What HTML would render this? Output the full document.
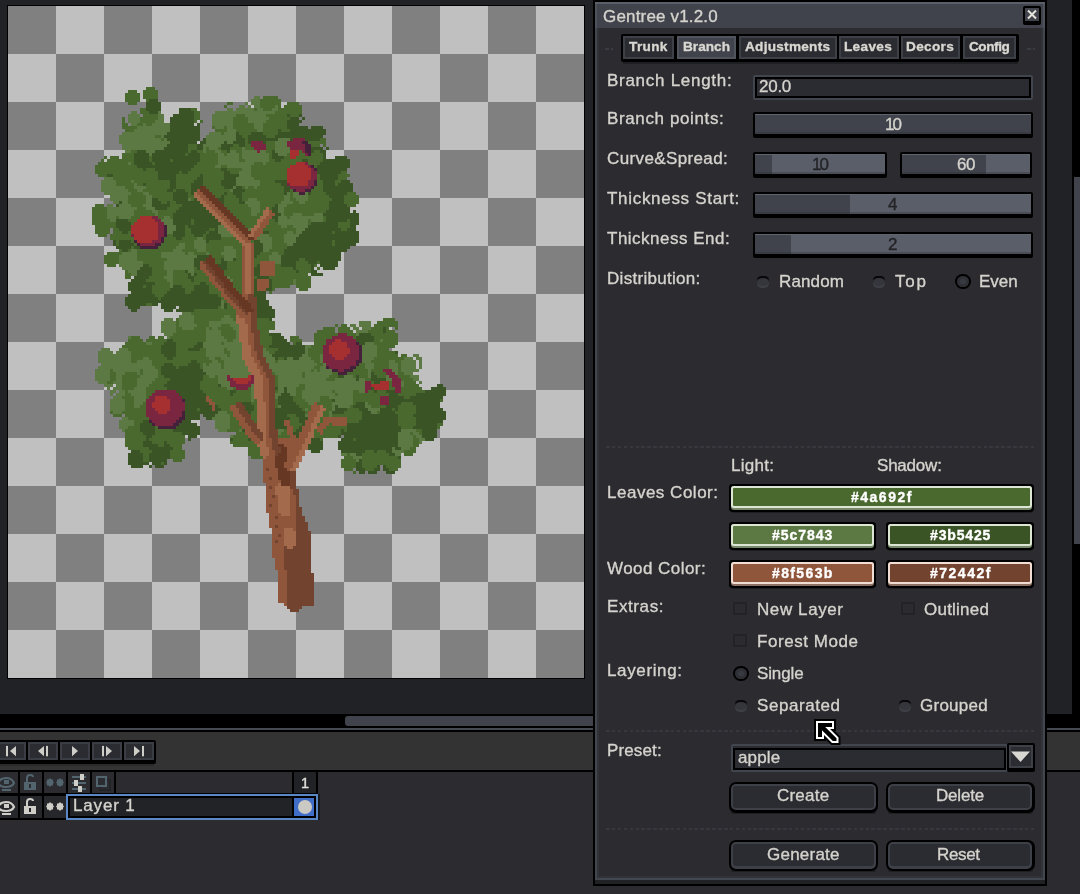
<!DOCTYPE html>
<html><head><meta charset="utf-8"><title>Gentree v1.2.0</title>
<style>
html,body{margin:0;padding:0;}
body{width:1080px;height:894px;overflow:hidden;background:#212226;position:relative;font-family:"Liberation Sans", sans-serif;}
body>div,body>svg,body>span{position:absolute;display:block;}
body>span{white-space:pre;will-change:transform;-webkit-text-stroke:0.35px;}
</style></head><body>
<div style="left:7px;top:5px;width:578px;height:674px;background:#000;"></div>
<div id="chk" style="left:8px;top:6px;width:576px;height:672px;background-color:#c0c0c0;background-image:conic-gradient(#c0c0c0 25%,#808080 0 50%,#c0c0c0 0 75%,#808080 0);background-size:96px 96px;"></div>
<svg id="tree" style="left:8px;top:6px" width="576" height="672" viewBox="0 0 192 224" shape-rendering="crispEdges">
<path fill="#5c7843" d="M82 30h2v1h-2zM81 31h3v1h-3zM79 32h1v1h-1zM81 32h3v1h-3zM77 33h2v1h-2zM80 33h1v1h-1zM82 33h2v1h-2zM89 33h1v1h-1zM73 34h2v1h-2zM76 34h6v1h-6zM83 34h2v1h-2zM88 34h2v1h-2zM41 35h2v1h-2zM50 35h1v1h-1zM69 35h20v1h-20zM40 36h4v1h-4zM50 36h2v1h-2zM68 36h8v1h-8zM79 36h7v1h-7zM40 37h4v1h-4zM50 37h2v1h-2zM68 37h7v1h-7zM80 37h7v1h-7zM40 38h4v1h-4zM49 38h3v1h-3zM68 38h7v1h-7zM80 38h6v1h-6zM41 39h2v1h-2zM45 39h1v1h-1zM48 39h6v1h-6zM68 39h7v1h-7zM82 39h3v1h-3zM43 40h11v1h-11zM69 40h3v1h-3zM73 40h2v1h-2zM82 40h3v1h-3zM42 41h12v1h-12zM73 41h3v1h-3zM83 41h2v1h-2zM38 42h15v1h-15zM67 42h4v1h-4zM72 42h4v1h-4zM37 43h12v1h-12zM51 43h1v1h-1zM66 43h10v1h-10zM37 44h14v1h-14zM52 44h1v1h-1zM66 44h10v1h-10zM90 44h4v1h-4zM37 45h17v1h-17zM66 45h6v1h-6zM73 45h2v1h-2zM89 45h4v1h-4zM38 46h15v1h-15zM65 46h6v1h-6zM89 46h4v1h-4zM38 47h14v1h-14zM65 47h1v1h-1zM67 47h3v1h-3zM78 47h1v1h-1zM89 47h5v1h-5zM39 48h2v1h-2zM46 48h3v1h-3zM65 48h1v1h-1zM69 48h2v1h-2zM74 48h2v1h-2zM78 48h5v1h-5zM84 48h2v1h-2zM89 48h5v1h-5zM47 49h1v1h-1zM70 49h2v1h-2zM73 49h4v1h-4zM78 49h9v1h-9zM90 49h3v1h-3zM70 50h7v1h-7zM78 50h9v1h-9zM70 51h7v1h-7zM79 51h8v1h-8zM40 52h1v1h-1zM70 52h12v1h-12zM85 52h1v1h-1zM69 53h2v1h-2zM73 53h8v1h-8zM78 54h3v1h-3zM77 55h4v1h-4zM77 56h4v1h-4zM32 57h3v1h-3zM76 57h6v1h-6zM31 58h5v1h-5zM41 58h1v1h-1zM76 58h8v1h-8zM31 59h5v1h-5zM42 59h1v1h-1zM76 59h8v1h-8zM31 60h8v1h-8zM42 60h4v1h-4zM75 60h1v1h-1zM79 60h1v1h-1zM82 60h1v1h-1zM31 61h9v1h-9zM43 61h2v1h-2zM74 61h1v1h-1zM32 62h9v1h-9zM45 62h2v1h-2zM93 62h1v1h-1zM95 62h2v1h-2zM99 62h1v1h-1zM34 63h6v1h-6zM46 63h2v1h-2zM92 63h2v1h-2zM95 63h5v1h-5zM34 64h6v1h-6zM46 64h2v1h-2zM60 64h1v1h-1zM80 64h3v1h-3zM92 64h2v1h-2zM96 64h4v1h-4zM35 65h2v1h-2zM38 65h2v1h-2zM46 65h2v1h-2zM79 65h5v1h-5zM91 65h4v1h-4zM97 65h2v1h-2zM33 66h2v1h-2zM37 66h4v1h-4zM45 66h3v1h-3zM80 66h4v1h-4zM90 66h3v1h-3zM33 67h10v1h-10zM46 67h3v1h-3zM81 67h3v1h-3zM90 67h2v1h-2zM33 68h9v1h-9zM48 68h2v1h-2zM81 68h3v1h-3zM90 68h2v1h-2zM33 69h9v1h-9zM49 69h1v1h-1zM81 69h2v1h-2zM91 69h1v1h-1zM95 69h3v1h-3zM102 69h3v1h-3zM33 70h3v1h-3zM37 70h4v1h-4zM52 70h2v1h-2zM90 70h3v1h-3zM94 70h11v1h-11zM34 71h2v1h-2zM51 71h4v1h-4zM90 71h10v1h-10zM101 71h4v1h-4zM52 72h3v1h-3zM90 72h10v1h-10zM53 73h3v1h-3zM70 73h2v1h-2zM91 73h2v1h-2zM95 73h5v1h-5zM53 74h3v1h-3zM70 74h3v1h-3zM80 74h1v1h-1zM96 74h3v1h-3zM53 75h2v1h-2zM70 75h4v1h-4zM93 75h2v1h-2zM96 75h2v1h-2zM71 76h4v1h-4zM84 76h3v1h-3zM92 76h5v1h-5zM63 77h2v1h-2zM83 77h5v1h-5zM92 77h4v1h-4zM62 78h4v1h-4zM84 78h4v1h-4zM92 78h4v1h-4zM57 79h2v1h-2zM62 79h4v1h-4zM85 79h3v1h-3zM93 79h2v1h-2zM56 80h3v1h-3zM62 80h4v1h-4zM72 80h3v1h-3zM85 80h3v1h-3zM41 81h2v1h-2zM55 81h3v1h-3zM63 81h3v1h-3zM72 81h4v1h-4zM85 81h2v1h-2zM38 82h5v1h-5zM51 82h8v1h-8zM60 82h2v1h-2zM66 82h1v1h-1zM71 82h5v1h-5zM88 82h2v1h-2zM37 83h6v1h-6zM51 83h12v1h-12zM72 83h4v1h-4zM87 83h4v1h-4zM37 84h6v1h-6zM53 84h9v1h-9zM72 84h3v1h-3zM87 84h4v1h-4zM37 85h8v1h-8zM52 85h10v1h-10zM89 85h2v1h-2zM37 86h8v1h-8zM52 86h10v1h-10zM38 87h6v1h-6zM52 87h10v1h-10zM40 88h3v1h-3zM53 88h2v1h-2zM60 88h2v1h-2zM41 89h2v1h-2zM53 89h2v1h-2zM61 89h1v1h-1zM52 90h3v1h-3zM73 90h1v1h-1zM53 91h2v1h-2zM74 91h1v1h-1zM95 91h1v1h-1zM54 92h1v1h-1zM95 92h1v1h-1zM54 93h1v1h-1zM71 98h1v1h-1zM71 99h1v1h-1zM71 100h1v1h-1zM58 102h3v1h-3zM57 103h5v1h-5zM72 103h2v1h-2zM52 104h3v1h-3zM57 104h5v1h-5zM71 104h4v1h-4zM51 105h5v1h-5zM57 105h5v1h-5zM67 105h9v1h-9zM117 105h4v1h-4zM51 106h5v1h-5zM57 106h6v1h-6zM67 106h4v1h-4zM74 106h3v1h-3zM114 106h2v1h-2zM117 106h4v1h-4zM51 107h5v1h-5zM58 107h4v1h-4zM66 107h1v1h-1zM68 107h2v1h-2zM75 107h2v1h-2zM115 107h2v1h-2zM118 107h3v1h-3zM51 108h5v1h-5zM66 108h5v1h-5zM76 108h1v1h-1zM116 108h4v1h-4zM52 109h3v1h-3zM66 109h5v1h-5zM76 109h1v1h-1zM116 109h1v1h-1zM40 110h1v1h-1zM53 110h1v1h-1zM66 110h6v1h-6zM76 110h1v1h-1zM66 111h7v1h-7zM75 111h2v1h-2zM124 111h1v1h-1zM46 112h2v1h-2zM65 112h6v1h-6zM72 112h6v1h-6zM119 112h3v1h-3zM65 113h13v1h-13zM99 113h2v1h-2zM118 113h5v1h-5zM31 114h3v1h-3zM37 114h3v1h-3zM66 114h6v1h-6zM73 114h5v1h-5zM85 114h1v1h-1zM99 114h1v1h-1zM118 114h5v1h-5zM30 115h5v1h-5zM36 115h5v1h-5zM66 115h6v1h-6zM74 115h4v1h-4zM85 115h2v1h-2zM99 115h1v1h-1zM118 115h5v1h-5zM30 116h11v1h-11zM66 116h7v1h-7zM74 116h4v1h-4zM85 116h3v1h-3zM98 116h2v1h-2zM104 116h1v1h-1zM118 116h5v1h-5zM135 116h2v1h-2zM30 117h11v1h-11zM45 117h2v1h-2zM67 117h2v1h-2zM71 117h7v1h-7zM86 117h3v1h-3zM93 117h2v1h-2zM97 117h4v1h-4zM104 117h1v1h-1zM118 117h4v1h-4zM132 117h3v1h-3zM136 117h2v1h-2zM30 118h11v1h-11zM43 118h5v1h-5zM68 118h2v1h-2zM72 118h7v1h-7zM86 118h3v1h-3zM90 118h12v1h-12zM104 118h1v1h-1zM118 118h3v1h-3zM127 118h2v1h-2zM131 118h5v1h-5zM137 118h1v1h-1zM31 119h17v1h-17zM65 119h1v1h-1zM67 119h4v1h-4zM72 119h7v1h-7zM87 119h16v1h-16zM105 119h1v1h-1zM119 119h3v1h-3zM127 119h3v1h-3zM131 119h5v1h-5zM137 119h1v1h-1zM30 120h19v1h-19zM65 120h6v1h-6zM72 120h8v1h-8zM87 120h15v1h-15zM104 120h2v1h-2zM119 120h3v1h-3zM127 120h3v1h-3zM131 120h5v1h-5zM137 120h1v1h-1zM29 121h5v1h-5zM35 121h9v1h-9zM45 121h5v1h-5zM65 121h15v1h-15zM88 121h13v1h-13zM102 121h1v1h-1zM104 121h4v1h-4zM120 121h1v1h-1zM128 121h2v1h-2zM131 121h6v1h-6zM29 122h5v1h-5zM36 122h3v1h-3zM43 122h1v1h-1zM45 122h5v1h-5zM66 122h15v1h-15zM89 122h9v1h-9zM99 122h9v1h-9zM120 122h1v1h-1zM129 122h1v1h-1zM132 122h3v1h-3zM29 123h5v1h-5zM36 123h2v1h-2zM44 123h6v1h-6zM67 123h2v1h-2zM70 123h3v1h-3zM74 123h6v1h-6zM90 123h8v1h-8zM99 123h8v1h-8zM112 123h3v1h-3zM120 123h1v1h-1zM126 123h1v1h-1zM134 123h3v1h-3zM29 124h5v1h-5zM36 124h2v1h-2zM43 124h6v1h-6zM70 124h3v1h-3zM90 124h16v1h-16zM109 124h7v1h-7zM117 124h2v1h-2zM126 124h2v1h-2zM135 124h2v1h-2zM30 125h3v1h-3zM35 125h3v1h-3zM43 125h5v1h-5zM70 125h4v1h-4zM90 125h29v1h-29zM131 125h1v1h-1zM137 125h1v1h-1zM32 126h3v1h-3zM36 126h2v1h-2zM43 126h4v1h-4zM71 126h3v1h-3zM81 126h1v1h-1zM90 126h7v1h-7zM99 126h20v1h-20zM131 126h1v1h-1zM33 127h1v1h-1zM35 127h3v1h-3zM42 127h4v1h-4zM73 127h2v1h-2zM81 127h1v1h-1zM90 127h2v1h-2zM93 127h3v1h-3zM99 127h20v1h-20zM34 128h2v1h-2zM37 128h2v1h-2zM40 128h6v1h-6zM81 128h1v1h-1zM90 128h2v1h-2zM93 128h3v1h-3zM98 128h10v1h-10zM109 128h6v1h-6zM117 128h2v1h-2zM34 129h1v1h-1zM36 129h3v1h-3zM41 129h5v1h-5zM81 129h1v1h-1zM89 129h2v1h-2zM94 129h2v1h-2zM98 129h11v1h-11zM110 129h5v1h-5zM35 130h3v1h-3zM42 130h4v1h-4zM81 130h1v1h-1zM89 130h1v1h-1zM98 130h6v1h-6zM107 130h8v1h-8zM34 131h5v1h-5zM42 131h4v1h-4zM81 131h1v1h-1zM99 131h5v1h-5zM109 131h6v1h-6zM34 132h5v1h-5zM42 132h3v1h-3zM100 132h2v1h-2zM108 132h7v1h-7zM119 132h1v1h-1zM34 133h5v1h-5zM42 133h2v1h-2zM90 133h1v1h-1zM108 133h1v1h-1zM110 133h4v1h-4zM119 133h2v1h-2zM34 134h5v1h-5zM99 134h1v1h-1zM108 134h1v1h-1zM120 134h4v1h-4zM35 135h3v1h-3zM70 135h3v1h-3zM107 135h1v1h-1zM121 135h2v1h-2zM69 136h5v1h-5zM99 136h1v1h-1zM107 136h1v1h-1zM38 137h2v1h-2zM68 137h6v1h-6zM37 138h5v1h-5zM69 138h5v1h-5zM37 139h5v1h-5zM69 139h5v1h-5zM37 140h3v1h-3zM69 140h5v1h-5zM38 141h1v1h-1zM70 141h3v1h-3zM77 141h1v1h-1zM90 141h2v1h-2zM131 141h5v1h-5zM90 142h1v1h-1zM130 142h4v1h-4zM135 142h2v1h-2zM74 143h1v1h-1zM130 143h5v1h-5zM136 143h2v1h-2zM130 144h5v1h-5zM137 144h2v1h-2zM130 145h5v1h-5zM137 145h1v1h-1zM130 146h5v1h-5zM128 147h1v1h-1zM131 147h3v1h-3zM128 148h4v1h-4zM111 149h2v1h-2zM114 149h2v1h-2zM129 149h2v1h-2zM115 150h3v1h-3zM116 151h1v1h-1z"/>
<path fill="#4a692f" d="M46 27h3v1h-3zM40 28h3v1h-3zM45 28h5v1h-5zM39 29h5v1h-5zM45 29h5v1h-5zM39 30h5v1h-5zM45 30h5v1h-5zM85 30h5v1h-5zM39 31h5v1h-5zM46 31h1v1h-1zM84 31h7v1h-7zM40 32h3v1h-3zM73 32h2v1h-2zM84 32h7v1h-7zM93 32h4v1h-4zM72 33h1v1h-1zM84 33h5v1h-5zM90 33h1v1h-1zM92 33h6v1h-6zM44 34h2v1h-2zM61 34h2v1h-2zM82 34h1v1h-1zM85 34h3v1h-3zM90 34h8v1h-8zM44 35h3v1h-3zM62 35h2v1h-2zM89 35h9v1h-9zM45 36h5v1h-5zM62 36h2v1h-2zM76 36h3v1h-3zM86 36h7v1h-7zM94 36h3v1h-3zM38 37h1v1h-1zM44 37h6v1h-6zM62 37h2v1h-2zM75 37h5v1h-5zM87 37h7v1h-7zM38 38h1v1h-1zM44 38h5v1h-5zM62 38h1v1h-1zM64 38h1v1h-1zM75 38h5v1h-5zM86 38h7v1h-7zM38 39h2v1h-2zM43 39h2v1h-2zM46 39h2v1h-2zM75 39h7v1h-7zM85 39h8v1h-8zM38 40h5v1h-5zM68 40h1v1h-1zM72 40h1v1h-1zM75 40h7v1h-7zM85 40h8v1h-8zM39 41h3v1h-3zM69 41h4v1h-4zM76 41h7v1h-7zM85 41h5v1h-5zM91 41h3v1h-3zM71 42h1v1h-1zM77 42h4v1h-4zM85 42h5v1h-5zM49 43h2v1h-2zM78 43h2v1h-2zM86 43h3v1h-3zM51 44h1v1h-1zM79 44h1v1h-1zM104 44h2v1h-2zM79 45h1v1h-1zM86 45h3v1h-3zM100 45h6v1h-6zM60 46h3v1h-3zM75 46h2v1h-2zM79 46h2v1h-2zM86 46h3v1h-3zM101 46h3v1h-3zM105 46h1v1h-1zM60 47h3v1h-3zM66 47h1v1h-1zM70 47h1v1h-1zM74 47h4v1h-4zM79 47h3v1h-3zM86 47h3v1h-3zM41 48h2v1h-2zM60 48h1v1h-1zM63 48h2v1h-2zM66 48h3v1h-3zM71 48h2v1h-2zM76 48h2v1h-2zM86 48h2v1h-2zM97 48h1v1h-1zM102 48h2v1h-2zM38 49h4v1h-4zM59 49h1v1h-1zM64 49h6v1h-6zM72 49h1v1h-1zM77 49h1v1h-1zM87 49h1v1h-1zM93 49h1v1h-1zM97 49h2v1h-2zM101 49h4v1h-4zM32 50h1v1h-1zM34 50h3v1h-3zM38 50h4v1h-4zM47 50h1v1h-1zM64 50h6v1h-6zM77 50h1v1h-1zM87 50h1v1h-1zM92 50h2v1h-2zM96 50h9v1h-9zM31 51h1v1h-1zM33 51h9v1h-9zM47 51h1v1h-1zM54 51h1v1h-1zM64 51h6v1h-6zM77 51h2v1h-2zM87 51h2v1h-2zM91 51h7v1h-7zM100 51h5v1h-5zM30 52h10v1h-10zM41 52h1v1h-1zM48 52h1v1h-1zM63 52h7v1h-7zM82 52h3v1h-3zM86 52h10v1h-10zM100 52h4v1h-4zM29 53h14v1h-14zM62 53h7v1h-7zM71 53h2v1h-2zM81 53h13v1h-13zM102 53h1v1h-1zM29 54h16v1h-16zM46 54h3v1h-3zM61 54h10v1h-10zM73 54h5v1h-5zM81 54h12v1h-12zM29 55h21v1h-21zM57 55h1v1h-1zM60 55h12v1h-12zM74 55h3v1h-3zM81 55h12v1h-12zM111 55h2v1h-2zM30 56h3v1h-3zM35 56h15v1h-15zM56 56h8v1h-8zM65 56h7v1h-7zM81 56h12v1h-12zM103 56h1v1h-1zM110 56h4v1h-4zM35 57h15v1h-15zM56 57h7v1h-7zM65 57h7v1h-7zM82 57h11v1h-11zM103 57h1v1h-1zM110 57h3v1h-3zM36 58h5v1h-5zM42 58h12v1h-12zM56 58h6v1h-6zM65 58h6v1h-6zM84 58h5v1h-5zM103 58h2v1h-2zM109 58h2v1h-2zM36 59h6v1h-6zM43 59h2v1h-2zM46 59h8v1h-8zM56 59h5v1h-5zM65 59h6v1h-6zM84 59h7v1h-7zM103 59h2v1h-2zM109 59h1v1h-1zM39 60h3v1h-3zM46 60h8v1h-8zM56 60h5v1h-5zM66 60h6v1h-6zM78 60h1v1h-1zM80 60h2v1h-2zM83 60h9v1h-9zM102 60h3v1h-3zM40 61h3v1h-3zM45 61h8v1h-8zM55 61h1v1h-1zM59 61h2v1h-2zM67 61h7v1h-7zM79 61h13v1h-13zM94 61h1v1h-1zM101 61h4v1h-4zM41 62h4v1h-4zM47 62h8v1h-8zM60 62h1v1h-1zM68 62h4v1h-4zM73 62h2v1h-2zM78 62h14v1h-14zM94 62h1v1h-1zM101 62h5v1h-5zM113 62h3v1h-3zM40 63h6v1h-6zM48 63h7v1h-7zM60 63h2v1h-2zM69 63h2v1h-2zM72 63h4v1h-4zM78 63h14v1h-14zM94 63h1v1h-1zM100 63h7v1h-7zM112 63h5v1h-5zM40 64h6v1h-6zM50 64h5v1h-5zM61 64h1v1h-1zM72 64h5v1h-5zM78 64h2v1h-2zM83 64h9v1h-9zM94 64h2v1h-2zM100 64h8v1h-8zM112 64h5v1h-5zM40 65h6v1h-6zM51 65h2v1h-2zM54 65h2v1h-2zM72 65h5v1h-5zM84 65h7v1h-7zM95 65h2v1h-2zM99 65h8v1h-8zM112 65h5v1h-5zM29 66h3v1h-3zM41 66h4v1h-4zM54 66h4v1h-4zM72 66h8v1h-8zM84 66h5v1h-5zM93 66h14v1h-14zM113 66h3v1h-3zM28 67h5v1h-5zM43 67h3v1h-3zM53 67h4v1h-4zM73 67h8v1h-8zM84 67h2v1h-2zM87 67h1v1h-1zM92 67h15v1h-15zM28 68h5v1h-5zM42 68h6v1h-6zM50 68h6v1h-6zM74 68h7v1h-7zM84 68h1v1h-1zM92 68h14v1h-14zM28 69h5v1h-5zM42 69h7v1h-7zM50 69h5v1h-5zM75 69h6v1h-6zM83 69h2v1h-2zM92 69h3v1h-3zM98 69h4v1h-4zM28 70h5v1h-5zM36 70h1v1h-1zM41 70h3v1h-3zM50 70h2v1h-2zM54 70h1v1h-1zM76 70h8v1h-8zM93 70h1v1h-1zM105 70h1v1h-1zM28 71h6v1h-6zM40 71h3v1h-3zM61 71h1v1h-1zM77 71h6v1h-6zM87 71h2v1h-2zM100 71h1v1h-1zM105 71h1v1h-1zM113 71h1v1h-1zM28 72h8v1h-8zM41 72h1v1h-1zM61 72h1v1h-1zM78 72h5v1h-5zM87 72h3v1h-3zM100 72h1v1h-1zM110 72h4v1h-4zM29 73h7v1h-7zM59 73h1v1h-1zM79 73h3v1h-3zM86 73h5v1h-5zM93 73h2v1h-2zM110 73h4v1h-4zM29 74h5v1h-5zM35 74h2v1h-2zM59 74h2v1h-2zM67 74h2v1h-2zM85 74h11v1h-11zM111 74h2v1h-2zM29 75h5v1h-5zM35 75h3v1h-3zM40 75h1v1h-1zM59 75h2v1h-2zM66 75h1v1h-1zM87 75h6v1h-6zM95 75h1v1h-1zM108 75h1v1h-1zM30 76h3v1h-3zM34 76h7v1h-7zM53 76h2v1h-2zM59 76h3v1h-3zM65 76h1v1h-1zM87 76h5v1h-5zM34 77h8v1h-8zM52 77h4v1h-4zM58 77h5v1h-5zM65 77h1v1h-1zM71 77h5v1h-5zM88 77h4v1h-4zM36 78h1v1h-1zM41 78h1v1h-1zM52 78h10v1h-10zM67 78h10v1h-10zM81 78h1v1h-1zM88 78h4v1h-4zM108 78h1v1h-1zM36 79h1v1h-1zM42 79h1v1h-1zM51 79h6v1h-6zM59 79h3v1h-3zM66 79h12v1h-12zM88 79h5v1h-5zM108 79h1v1h-1zM41 80h1v1h-1zM50 80h6v1h-6zM59 80h3v1h-3zM66 80h6v1h-6zM75 80h3v1h-3zM88 80h5v1h-5zM37 81h1v1h-1zM40 81h1v1h-1zM43 81h12v1h-12zM58 81h5v1h-5zM66 81h6v1h-6zM76 81h2v1h-2zM87 81h5v1h-5zM33 82h5v1h-5zM43 82h8v1h-8zM59 82h1v1h-1zM62 82h4v1h-4zM67 82h4v1h-4zM76 82h2v1h-2zM84 82h4v1h-4zM90 82h2v1h-2zM32 83h5v1h-5zM43 83h8v1h-8zM68 83h4v1h-4zM76 83h2v1h-2zM83 83h4v1h-4zM32 84h5v1h-5zM43 84h10v1h-10zM69 84h2v1h-2zM76 84h2v1h-2zM82 84h5v1h-5zM97 84h2v1h-2zM32 85h5v1h-5zM45 85h7v1h-7zM69 85h2v1h-2zM73 85h5v1h-5zM82 85h2v1h-2zM96 85h4v1h-4zM103 85h1v1h-1zM33 86h3v1h-3zM47 86h5v1h-5zM73 86h5v1h-5zM82 86h1v1h-1zM89 86h2v1h-2zM96 86h5v1h-5zM102 86h1v1h-1zM48 87h4v1h-4zM62 87h1v1h-1zM73 87h5v1h-5zM89 87h6v1h-6zM96 87h5v1h-5zM103 87h1v1h-1zM39 88h1v1h-1zM48 88h5v1h-5zM55 88h4v1h-4zM62 88h3v1h-3zM72 88h6v1h-6zM89 88h7v1h-7zM97 88h4v1h-4zM39 89h2v1h-2zM48 89h5v1h-5zM55 89h5v1h-5zM63 89h3v1h-3zM72 89h6v1h-6zM89 89h11v1h-11zM39 90h2v1h-2zM47 90h5v1h-5zM55 90h5v1h-5zM62 90h5v1h-5zM74 90h4v1h-4zM82 90h1v1h-1zM87 90h14v1h-14zM46 91h7v1h-7zM55 91h6v1h-6zM62 91h5v1h-5zM75 91h3v1h-3zM88 91h7v1h-7zM96 91h5v1h-5zM49 92h5v1h-5zM55 92h9v1h-9zM66 92h2v1h-2zM75 92h3v1h-3zM88 92h7v1h-7zM96 92h5v1h-5zM45 93h1v1h-1zM48 93h6v1h-6zM58 93h4v1h-4zM67 93h2v1h-2zM75 93h3v1h-3zM88 93h6v1h-6zM96 93h5v1h-5zM48 94h6v1h-6zM59 94h3v1h-3zM67 94h3v1h-3zM76 94h2v1h-2zM88 94h1v1h-1zM97 94h3v1h-3zM48 95h5v1h-5zM59 95h2v1h-2zM67 95h4v1h-4zM77 95h1v1h-1zM87 95h1v1h-1zM49 96h3v1h-3zM70 96h1v1h-1zM50 97h1v1h-1zM71 97h1v1h-1zM72 98h1v1h-1zM46 99h2v1h-2zM73 99h1v1h-1zM70 100h1v1h-1zM73 100h2v1h-2zM62 101h14v1h-14zM61 102h15v1h-15zM62 103h10v1h-10zM74 103h2v1h-2zM56 104h1v1h-1zM62 104h9v1h-9zM75 104h1v1h-1zM83 104h4v1h-4zM125 104h4v1h-4zM56 105h1v1h-1zM62 105h5v1h-5zM83 105h6v1h-6zM123 105h7v1h-7zM56 106h1v1h-1zM63 106h4v1h-4zM71 106h3v1h-3zM83 106h6v1h-6zM109 106h1v1h-1zM111 106h2v1h-2zM122 106h8v1h-8zM56 107h2v1h-2zM62 107h4v1h-4zM67 107h1v1h-1zM70 107h5v1h-5zM83 107h6v1h-6zM105 107h4v1h-4zM110 107h4v1h-4zM121 107h4v1h-4zM126 107h1v1h-1zM129 107h1v1h-1zM56 108h10v1h-10zM71 108h5v1h-5zM84 108h3v1h-3zM103 108h6v1h-6zM110 108h5v1h-5zM120 108h5v1h-5zM126 108h3v1h-3zM55 109h11v1h-11zM71 109h5v1h-5zM84 109h3v1h-3zM102 109h8v1h-8zM113 109h3v1h-3zM121 109h9v1h-9zM41 110h3v1h-3zM47 110h2v1h-2zM50 110h2v1h-2zM54 110h12v1h-12zM72 110h4v1h-4zM84 110h4v1h-4zM94 110h3v1h-3zM102 110h6v1h-6zM115 110h1v1h-1zM122 110h8v1h-8zM40 111h5v1h-5zM46 111h7v1h-7zM55 111h11v1h-11zM73 111h2v1h-2zM84 111h4v1h-4zM94 111h4v1h-4zM102 111h4v1h-4zM122 111h2v1h-2zM125 111h5v1h-5zM39 112h7v1h-7zM48 112h4v1h-4zM56 112h7v1h-7zM71 112h1v1h-1zM84 112h4v1h-4zM95 112h1v1h-1zM102 112h4v1h-4zM122 112h8v1h-8zM38 113h13v1h-13zM56 113h6v1h-6zM85 113h2v1h-2zM101 113h4v1h-4zM123 113h6v1h-6zM40 114h11v1h-11zM56 114h4v1h-4zM64 114h2v1h-2zM72 114h1v1h-1zM86 114h4v1h-4zM100 114h5v1h-5zM123 114h4v1h-4zM41 115h10v1h-10zM56 115h10v1h-10zM72 115h2v1h-2zM87 115h2v1h-2zM100 115h5v1h-5zM123 115h6v1h-6zM41 116h11v1h-11zM56 116h10v1h-10zM73 116h1v1h-1zM100 116h4v1h-4zM123 116h7v1h-7zM131 116h2v1h-2zM41 117h4v1h-4zM47 117h6v1h-6zM55 117h12v1h-12zM69 117h2v1h-2zM90 117h2v1h-2zM101 117h3v1h-3zM122 117h10v1h-10zM41 118h2v1h-2zM48 118h13v1h-13zM63 118h5v1h-5zM70 118h2v1h-2zM89 118h1v1h-1zM102 118h2v1h-2zM121 118h6v1h-6zM129 118h2v1h-2zM48 119h4v1h-4zM55 119h5v1h-5zM64 119h1v1h-1zM66 119h1v1h-1zM71 119h1v1h-1zM103 119h2v1h-2zM117 119h2v1h-2zM122 119h5v1h-5zM130 119h1v1h-1zM49 120h2v1h-2zM56 120h1v1h-1zM64 120h1v1h-1zM71 120h1v1h-1zM102 120h2v1h-2zM116 120h3v1h-3zM122 120h5v1h-5zM130 120h1v1h-1zM34 121h1v1h-1zM44 121h1v1h-1zM50 121h1v1h-1zM101 121h1v1h-1zM103 121h1v1h-1zM115 121h5v1h-5zM121 121h4v1h-4zM130 121h1v1h-1zM34 122h2v1h-2zM39 122h4v1h-4zM44 122h1v1h-1zM50 122h1v1h-1zM88 122h1v1h-1zM98 122h1v1h-1zM108 122h2v1h-2zM113 122h7v1h-7zM122 122h4v1h-4zM130 122h2v1h-2zM34 123h2v1h-2zM38 123h6v1h-6zM50 123h2v1h-2zM65 123h2v1h-2zM69 123h1v1h-1zM89 123h1v1h-1zM98 123h1v1h-1zM107 123h3v1h-3zM115 123h1v1h-1zM117 123h3v1h-3zM123 123h3v1h-3zM130 123h4v1h-4zM34 124h2v1h-2zM38 124h5v1h-5zM49 124h5v1h-5zM65 124h5v1h-5zM89 124h1v1h-1zM106 124h3v1h-3zM119 124h2v1h-2zM131 124h4v1h-4zM33 125h2v1h-2zM38 125h5v1h-5zM48 125h5v1h-5zM64 125h6v1h-6zM89 125h1v1h-1zM121 125h1v1h-1zM127 125h1v1h-1zM132 125h4v1h-4zM38 126h5v1h-5zM47 126h5v1h-5zM64 126h6v1h-6zM89 126h1v1h-1zM97 126h2v1h-2zM127 126h1v1h-1zM132 126h5v1h-5zM38 127h4v1h-4zM46 127h7v1h-7zM64 127h9v1h-9zM75 127h1v1h-1zM80 127h1v1h-1zM96 127h3v1h-3zM127 127h2v1h-2zM131 127h7v1h-7zM39 128h1v1h-1zM46 128h3v1h-3zM65 128h9v1h-9zM76 128h5v1h-5zM89 128h1v1h-1zM96 128h2v1h-2zM108 128h1v1h-1zM115 128h2v1h-2zM120 128h2v1h-2zM123 128h3v1h-3zM131 128h8v1h-8zM39 129h2v1h-2zM46 129h2v1h-2zM66 129h8v1h-8zM75 129h6v1h-6zM96 129h2v1h-2zM109 129h1v1h-1zM115 129h12v1h-12zM130 129h6v1h-6zM38 130h4v1h-4zM46 130h1v1h-1zM67 130h14v1h-14zM95 130h3v1h-3zM104 130h3v1h-3zM115 130h9v1h-9zM132 130h2v1h-2zM39 131h3v1h-3zM68 131h13v1h-13zM82 131h1v1h-1zM89 131h1v1h-1zM95 131h4v1h-4zM104 131h4v1h-4zM115 131h9v1h-9zM144 131h1v1h-1zM39 132h3v1h-3zM45 132h1v1h-1zM69 132h7v1h-7zM81 132h2v1h-2zM89 132h1v1h-1zM96 132h4v1h-4zM103 132h5v1h-5zM115 132h1v1h-1zM120 132h4v1h-4zM131 132h4v1h-4zM39 133h3v1h-3zM44 133h2v1h-2zM70 133h4v1h-4zM82 133h1v1h-1zM89 133h1v1h-1zM97 133h4v1h-4zM105 133h3v1h-3zM114 133h1v1h-1zM121 133h5v1h-5zM130 133h6v1h-6zM39 134h7v1h-7zM63 134h1v1h-1zM71 134h3v1h-3zM82 134h1v1h-1zM98 134h1v1h-1zM100 134h1v1h-1zM106 134h2v1h-2zM113 134h4v1h-4zM128 134h1v1h-1zM130 134h6v1h-6zM34 135h1v1h-1zM38 135h8v1h-8zM73 135h2v1h-2zM81 135h2v1h-2zM99 135h1v1h-1zM105 135h2v1h-2zM112 135h6v1h-6zM123 135h1v1h-1zM129 135h7v1h-7zM35 136h3v1h-3zM39 136h7v1h-7zM74 136h1v1h-1zM81 136h2v1h-2zM93 136h3v1h-3zM105 136h2v1h-2zM108 136h10v1h-10zM130 136h5v1h-5zM40 137h7v1h-7zM74 137h2v1h-2zM81 137h2v1h-2zM94 137h3v1h-3zM104 137h1v1h-1zM113 137h5v1h-5zM130 137h6v1h-6zM42 138h3v1h-3zM74 138h3v1h-3zM82 138h1v1h-1zM94 138h3v1h-3zM104 138h1v1h-1zM113 138h4v1h-4zM130 138h6v1h-6zM42 139h2v1h-2zM74 139h3v1h-3zM94 139h4v1h-4zM103 139h1v1h-1zM107 139h1v1h-1zM130 139h6v1h-6zM143 139h2v1h-2zM40 140h4v1h-4zM49 140h1v1h-1zM74 140h4v1h-4zM95 140h2v1h-2zM106 140h7v1h-7zM131 140h4v1h-4zM143 140h1v1h-1zM39 141h5v1h-5zM49 141h6v1h-6zM73 141h4v1h-4zM92 141h1v1h-1zM95 141h1v1h-1zM102 141h1v1h-1zM105 141h6v1h-6zM112 141h1v1h-1zM136 141h2v1h-2zM39 142h6v1h-6zM49 142h9v1h-9zM76 142h3v1h-3zM91 142h2v1h-2zM102 142h2v1h-2zM105 142h6v1h-6zM134 142h1v1h-1zM137 142h1v1h-1zM39 143h7v1h-7zM48 143h11v1h-11zM75 143h5v1h-5zM90 143h4v1h-4zM102 143h8v1h-8zM135 143h1v1h-1zM39 144h7v1h-7zM47 144h12v1h-12zM75 144h5v1h-5zM104 144h1v1h-1zM115 144h1v1h-1zM135 144h2v1h-2zM39 145h6v1h-6zM48 145h4v1h-4zM53 145h6v1h-6zM74 145h8v1h-8zM135 145h2v1h-2zM39 146h6v1h-6zM50 146h2v1h-2zM54 146h4v1h-4zM75 146h8v1h-8zM135 146h2v1h-2zM40 147h7v1h-7zM55 147h3v1h-3zM80 147h4v1h-4zM134 147h2v1h-2zM44 148h4v1h-4zM54 148h5v1h-5zM80 148h4v1h-4zM119 148h3v1h-3zM123 148h3v1h-3zM132 148h4v1h-4zM45 149h2v1h-2zM54 149h5v1h-5zM80 149h4v1h-4zM113 149h1v1h-1zM118 149h9v1h-9zM132 149h3v1h-3zM45 150h2v1h-2zM54 150h5v1h-5zM81 150h4v1h-4zM112 150h3v1h-3zM118 150h12v1h-12zM45 151h2v1h-2zM55 151h3v1h-3zM111 151h5v1h-5zM118 151h13v1h-13zM51 152h1v1h-1zM111 152h5v1h-5zM118 152h13v1h-13zM111 153h5v1h-5zM118 153h5v1h-5zM126 153h5v1h-5zM112 154h3v1h-3zM119 154h3v1h-3zM127 154h3v1h-3zM115 155h1v1h-1z"/>
<path fill="#3b5425" d="M47 31h3v1h-3zM46 32h5v1h-5zM46 33h5v1h-5zM46 34h5v1h-5zM57 34h4v1h-4zM47 35h3v1h-3zM57 35h5v1h-5zM55 36h7v1h-7zM93 36h1v1h-1zM97 36h1v1h-1zM54 37h8v1h-8zM94 37h3v1h-3zM98 37h1v1h-1zM54 38h8v1h-8zM93 38h5v1h-5zM54 39h8v1h-8zM63 39h1v1h-1zM93 39h4v1h-4zM54 40h10v1h-10zM93 40h7v1h-7zM101 40h4v1h-4zM54 41h10v1h-10zM90 41h1v1h-1zM94 41h12v1h-12zM53 42h11v1h-11zM76 42h1v1h-1zM81 42h4v1h-4zM90 42h16v1h-16zM52 43h12v1h-12zM76 43h2v1h-2zM80 43h6v1h-6zM89 43h16v1h-16zM53 44h11v1h-11zM65 44h1v1h-1zM76 44h3v1h-3zM80 44h10v1h-10zM94 44h1v1h-1zM99 44h5v1h-5zM54 45h9v1h-9zM64 45h2v1h-2zM72 45h1v1h-1zM75 45h4v1h-4zM80 45h1v1h-1zM85 45h1v1h-1zM53 46h7v1h-7zM63 46h2v1h-2zM71 46h4v1h-4zM77 46h2v1h-2zM52 47h8v1h-8zM63 47h2v1h-2zM71 47h3v1h-3zM101 47h4v1h-4zM106 47h1v1h-1zM43 48h3v1h-3zM49 48h11v1h-11zM61 48h2v1h-2zM73 48h1v1h-1zM88 48h1v1h-1zM101 48h1v1h-1zM104 48h2v1h-2zM42 49h5v1h-5zM48 49h11v1h-11zM60 49h4v1h-4zM88 49h2v1h-2zM105 49h1v1h-1zM42 50h5v1h-5zM48 50h16v1h-16zM88 50h4v1h-4zM105 50h1v1h-1zM109 50h4v1h-4zM42 51h5v1h-5zM48 51h6v1h-6zM55 51h9v1h-9zM89 51h2v1h-2zM98 51h2v1h-2zM105 51h9v1h-9zM42 52h6v1h-6zM49 52h14v1h-14zM104 52h10v1h-10zM43 53h19v1h-19zM103 53h11v1h-11zM45 54h1v1h-1zM49 54h12v1h-12zM71 54h2v1h-2zM103 54h10v1h-10zM50 55h7v1h-7zM58 55h2v1h-2zM72 55h2v1h-2zM103 55h8v1h-8zM33 56h2v1h-2zM50 56h6v1h-6zM64 56h1v1h-1zM72 56h5v1h-5zM104 56h6v1h-6zM50 57h6v1h-6zM63 57h2v1h-2zM72 57h4v1h-4zM104 57h6v1h-6zM54 58h2v1h-2zM62 58h3v1h-3zM71 58h5v1h-5zM89 58h4v1h-4zM105 58h4v1h-4zM111 58h3v1h-3zM45 59h1v1h-1zM54 59h2v1h-2zM61 59h4v1h-4zM71 59h5v1h-5zM91 59h2v1h-2zM105 59h4v1h-4zM110 59h5v1h-5zM54 60h2v1h-2zM61 60h3v1h-3zM72 60h3v1h-3zM76 60h2v1h-2zM92 60h2v1h-2zM105 60h10v1h-10zM53 61h2v1h-2zM56 61h3v1h-3zM61 61h2v1h-2zM75 61h4v1h-4zM92 61h2v1h-2zM105 61h10v1h-10zM55 62h5v1h-5zM61 62h1v1h-1zM72 62h1v1h-1zM75 62h3v1h-3zM92 62h1v1h-1zM100 62h1v1h-1zM106 62h7v1h-7zM55 63h5v1h-5zM71 63h1v1h-1zM76 63h2v1h-2zM107 63h5v1h-5zM48 64h2v1h-2zM55 64h5v1h-5zM62 64h1v1h-1zM70 64h2v1h-2zM77 64h1v1h-1zM108 64h4v1h-4zM37 65h1v1h-1zM48 65h3v1h-3zM53 65h1v1h-1zM56 65h8v1h-8zM71 65h1v1h-1zM77 65h2v1h-2zM107 65h5v1h-5zM36 66h1v1h-1zM48 66h6v1h-6zM58 66h7v1h-7zM89 66h1v1h-1zM107 66h6v1h-6zM49 67h4v1h-4zM57 67h9v1h-9zM88 67h2v1h-2zM107 67h7v1h-7zM56 68h11v1h-11zM88 68h2v1h-2zM106 68h8v1h-8zM115 68h1v1h-1zM55 69h13v1h-13zM89 69h2v1h-2zM105 69h12v1h-12zM55 70h14v1h-14zM88 70h2v1h-2zM106 70h11v1h-11zM36 71h4v1h-4zM55 71h6v1h-6zM62 71h8v1h-8zM89 71h1v1h-1zM106 71h7v1h-7zM114 71h3v1h-3zM36 72h5v1h-5zM55 72h6v1h-6zM62 72h9v1h-9zM101 72h9v1h-9zM114 72h3v1h-3zM36 73h5v1h-5zM56 73h3v1h-3zM60 73h10v1h-10zM100 73h10v1h-10zM114 73h2v1h-2zM37 74h4v1h-4zM56 74h3v1h-3zM61 74h6v1h-6zM69 74h1v1h-1zM99 74h12v1h-12zM113 74h3v1h-3zM38 75h2v1h-2zM55 75h4v1h-4zM61 75h5v1h-5zM67 75h3v1h-3zM85 75h2v1h-2zM98 75h10v1h-10zM109 75h8v1h-8zM55 76h4v1h-4zM62 76h3v1h-3zM66 76h5v1h-5zM97 76h20v1h-20zM56 77h2v1h-2zM66 77h5v1h-5zM96 77h21v1h-21zM35 78h1v1h-1zM37 78h4v1h-4zM66 78h1v1h-1zM82 78h2v1h-2zM96 78h12v1h-12zM109 78h8v1h-8zM35 79h1v1h-1zM37 79h5v1h-5zM82 79h3v1h-3zM95 79h13v1h-13zM109 79h7v1h-7zM36 80h5v1h-5zM42 80h2v1h-2zM82 80h3v1h-3zM93 80h21v1h-21zM38 81h2v1h-2zM82 81h3v1h-3zM92 81h21v1h-21zM82 82h2v1h-2zM92 82h19v1h-19zM63 83h4v1h-4zM82 83h1v1h-1zM91 83h20v1h-20zM62 84h4v1h-4zM71 84h1v1h-1zM75 84h1v1h-1zM91 84h6v1h-6zM99 84h12v1h-12zM62 85h2v1h-2zM71 85h2v1h-2zM91 85h5v1h-5zM100 85h3v1h-3zM104 85h6v1h-6zM45 86h2v1h-2zM62 86h2v1h-2zM70 86h3v1h-3zM83 86h1v1h-1zM91 86h5v1h-5zM101 86h1v1h-1zM104 86h6v1h-6zM44 87h4v1h-4zM63 87h1v1h-1zM71 87h2v1h-2zM82 87h2v1h-2zM95 87h1v1h-1zM101 87h1v1h-1zM105 87h4v1h-4zM43 88h5v1h-5zM59 88h1v1h-1zM82 88h2v1h-2zM96 88h1v1h-1zM101 88h2v1h-2zM43 89h5v1h-5zM60 89h1v1h-1zM62 89h1v1h-1zM82 89h2v1h-2zM101 89h4v1h-4zM42 90h5v1h-5zM60 90h2v1h-2zM83 90h4v1h-4zM41 91h5v1h-5zM61 91h1v1h-1zM82 91h1v1h-1zM87 91h1v1h-1zM40 92h9v1h-9zM64 92h2v1h-2zM82 92h1v1h-1zM87 92h1v1h-1zM40 93h5v1h-5zM46 93h2v1h-2zM55 93h3v1h-3zM62 93h5v1h-5zM82 93h1v1h-1zM87 93h1v1h-1zM40 94h8v1h-8zM54 94h5v1h-5zM62 94h5v1h-5zM82 94h1v1h-1zM86 94h2v1h-2zM41 95h7v1h-7zM53 95h6v1h-6zM61 95h6v1h-6zM82 95h4v1h-4zM40 96h9v1h-9zM52 96h18v1h-18zM82 96h4v1h-4zM39 97h11v1h-11zM51 97h20v1h-20zM83 97h3v1h-3zM39 98h32v1h-32zM83 98h4v1h-4zM39 99h7v1h-7zM48 99h2v1h-2zM51 99h20v1h-20zM72 99h1v1h-1zM83 99h4v1h-4zM40 100h4v1h-4zM51 100h5v1h-5zM57 100h13v1h-13zM72 100h1v1h-1zM83 100h5v1h-5zM41 101h2v1h-2zM52 101h3v1h-3zM56 101h6v1h-6zM83 101h6v1h-6zM83 102h6v1h-6zM83 103h6v1h-6zM87 104h1v1h-1zM125 107h1v1h-1zM125 108h1v1h-1zM87 109h4v1h-4zM117 109h4v1h-4zM88 110h4v1h-4zM116 110h6v1h-6zM53 111h2v1h-2zM88 111h5v1h-5zM116 111h6v1h-6zM52 112h4v1h-4zM63 112h2v1h-2zM88 112h6v1h-6zM96 112h2v1h-2zM117 112h2v1h-2zM51 113h5v1h-5zM62 113h3v1h-3zM87 113h12v1h-12zM51 114h5v1h-5zM60 114h4v1h-4zM90 114h9v1h-9zM51 115h5v1h-5zM89 115h10v1h-10zM129 115h1v1h-1zM52 116h4v1h-4zM88 116h10v1h-10zM53 117h2v1h-2zM89 117h1v1h-1zM92 117h1v1h-1zM95 117h2v1h-2zM61 118h2v1h-2zM52 119h3v1h-3zM60 119h4v1h-4zM51 120h5v1h-5zM57 120h7v1h-7zM51 121h14v1h-14zM51 122h15v1h-15zM121 122h1v1h-1zM52 123h13v1h-13zM110 123h2v1h-2zM116 123h1v1h-1zM121 123h2v1h-2zM54 124h11v1h-11zM116 124h1v1h-1zM121 124h5v1h-5zM53 125h11v1h-11zM122 125h2v1h-2zM52 126h12v1h-12zM70 126h1v1h-1zM143 126h2v1h-2zM53 127h11v1h-11zM89 127h1v1h-1zM92 127h1v1h-1zM121 127h1v1h-1zM141 127h5v1h-5zM56 128h9v1h-9zM74 128h2v1h-2zM92 128h1v1h-1zM122 128h1v1h-1zM126 128h3v1h-3zM139 128h7v1h-7zM57 129h9v1h-9zM74 129h1v1h-1zM91 129h3v1h-3zM127 129h3v1h-3zM136 129h10v1h-10zM58 130h8v1h-8zM90 130h5v1h-5zM127 130h5v1h-5zM134 130h11v1h-11zM59 131h7v1h-7zM90 131h5v1h-5zM108 131h1v1h-1zM127 131h17v1h-17zM59 132h8v1h-8zM78 132h3v1h-3zM90 132h6v1h-6zM116 132h3v1h-3zM127 132h4v1h-4zM135 132h9v1h-9zM59 133h9v1h-9zM69 133h1v1h-1zM79 133h3v1h-3zM91 133h6v1h-6zM109 133h1v1h-1zM115 133h4v1h-4zM126 133h4v1h-4zM136 133h8v1h-8zM59 134h4v1h-4zM64 134h4v1h-4zM69 134h2v1h-2zM79 134h3v1h-3zM89 134h9v1h-9zM109 134h4v1h-4zM117 134h3v1h-3zM124 134h4v1h-4zM129 134h1v1h-1zM136 134h9v1h-9zM59 135h11v1h-11zM80 135h1v1h-1zM89 135h10v1h-10zM108 135h4v1h-4zM118 135h3v1h-3zM124 135h5v1h-5zM136 135h10v1h-10zM59 136h5v1h-5zM65 136h4v1h-4zM89 136h4v1h-4zM96 136h3v1h-3zM118 136h12v1h-12zM135 136h11v1h-11zM59 137h5v1h-5zM66 137h2v1h-2zM89 137h5v1h-5zM97 137h3v1h-3zM118 137h12v1h-12zM136 137h10v1h-10zM45 138h2v1h-2zM58 138h3v1h-3zM89 138h3v1h-3zM97 138h2v1h-2zM117 138h13v1h-13zM136 138h9v1h-9zM44 139h4v1h-4zM57 139h6v1h-6zM89 139h3v1h-3zM98 139h1v1h-1zM113 139h17v1h-17zM136 139h7v1h-7zM44 140h5v1h-5zM56 140h8v1h-8zM89 140h4v1h-4zM97 140h1v1h-1zM113 140h18v1h-18zM135 140h8v1h-8zM44 141h5v1h-5zM55 141h9v1h-9zM78 141h1v1h-1zM96 141h2v1h-2zM111 141h1v1h-1zM113 141h18v1h-18zM138 141h5v1h-5zM45 142h4v1h-4zM58 142h6v1h-6zM95 142h2v1h-2zM111 142h19v1h-19zM138 142h5v1h-5zM46 143h2v1h-2zM60 143h3v1h-3zM96 143h1v1h-1zM110 143h1v1h-1zM112 143h18v1h-18zM138 143h5v1h-5zM46 144h1v1h-1zM60 144h1v1h-1zM74 144h1v1h-1zM80 144h1v1h-1zM101 144h3v1h-3zM111 144h4v1h-4zM116 144h14v1h-14zM139 144h3v1h-3zM45 145h3v1h-3zM52 145h1v1h-1zM101 145h4v1h-4zM110 145h20v1h-20zM45 146h5v1h-5zM52 146h2v1h-2zM100 146h5v1h-5zM110 146h20v1h-20zM47 147h8v1h-8zM100 147h5v1h-5zM110 147h18v1h-18zM129 147h2v1h-2zM41 148h3v1h-3zM48 148h6v1h-6zM101 148h3v1h-3zM111 148h8v1h-8zM122 148h1v1h-1zM126 148h2v1h-2zM40 149h5v1h-5zM47 149h7v1h-7zM116 149h2v1h-2zM127 149h2v1h-2zM40 150h5v1h-5zM47 150h7v1h-7zM130 150h1v1h-1zM40 151h5v1h-5zM47 151h6v1h-6zM117 151h1v1h-1zM40 152h7v1h-7zM48 152h3v1h-3zM52 152h1v1h-1zM116 152h2v1h-2zM41 153h4v1h-4zM47 153h1v1h-1zM49 153h3v1h-3zM116 153h2v1h-2zM123 153h1v1h-1zM125 153h1v1h-1zM116 154h3v1h-3zM122 154h2v1h-2zM125 154h2v1h-2zM117 155h2v1h-2zM120 155h3v1h-3zM126 155h3v1h-3z"/>
<path fill="#8f563b" d="M63 61h1v1h-1zM63 62h2v1h-2zM64 63h2v1h-2zM65 64h2v1h-2zM66 65h2v1h-2zM67 66h2v1h-2zM68 67h2v1h-2zM69 68h2v1h-2zM87 68h1v1h-1zM70 69h2v1h-2zM87 69h2v1h-2zM71 70h2v1h-2zM86 70h2v1h-2zM72 71h2v1h-2zM85 71h2v1h-2zM73 72h2v1h-2zM84 72h3v1h-3zM74 73h2v1h-2zM84 73h2v1h-2zM75 74h2v1h-2zM83 74h2v1h-2zM76 75h2v1h-2zM82 75h3v1h-3zM77 76h2v1h-2zM82 76h2v1h-2zM78 77h2v1h-2zM82 77h1v1h-1zM79 78h2v1h-2zM81 79h1v1h-1zM78 80h1v1h-1zM81 80h1v1h-1zM78 81h1v1h-1zM81 81h1v1h-1zM78 82h1v1h-1zM81 82h1v1h-1zM78 83h1v1h-1zM81 83h1v1h-1zM78 84h1v1h-1zM81 84h1v1h-1zM64 85h1v1h-1zM78 85h1v1h-1zM81 85h1v1h-1zM84 85h5v1h-5zM64 86h2v1h-2zM78 86h1v1h-1zM81 86h1v1h-1zM84 86h5v1h-5zM64 87h2v1h-2zM78 87h1v1h-1zM81 87h1v1h-1zM84 87h5v1h-5zM65 88h2v1h-2zM78 88h1v1h-1zM81 88h1v1h-1zM84 88h5v1h-5zM66 89h2v1h-2zM78 89h1v1h-1zM81 89h1v1h-1zM84 89h5v1h-5zM67 90h2v1h-2zM78 90h1v1h-1zM81 90h1v1h-1zM67 91h2v1h-2zM78 91h1v1h-1zM81 91h1v1h-1zM83 91h4v1h-4zM68 92h2v1h-2zM78 92h1v1h-1zM81 92h1v1h-1zM83 92h4v1h-4zM69 93h2v1h-2zM78 93h1v1h-1zM81 93h1v1h-1zM83 93h4v1h-4zM70 94h2v1h-2zM78 94h1v1h-1zM81 94h1v1h-1zM83 94h3v1h-3zM71 95h1v1h-1zM78 95h1v1h-1zM81 95h1v1h-1zM71 96h2v1h-2zM78 96h2v1h-2zM72 97h2v1h-2zM79 97h1v1h-1zM73 98h2v1h-2zM74 99h2v1h-2zM75 100h2v1h-2zM76 101h2v1h-2zM76 102h3v1h-3zM80 102h1v1h-1zM77 103h4v1h-4zM79 104h2v1h-2zM79 105h2v1h-2zM80 106h1v1h-1zM80 107h1v1h-1zM80 108h1v1h-1zM80 109h2v1h-2zM80 110h2v1h-2zM80 111h2v1h-2zM80 112h2v1h-2zM81 113h1v1h-1zM81 114h1v1h-1zM81 115h2v1h-2zM81 116h2v1h-2zM82 117h1v1h-1zM82 118h2v1h-2zM83 119h1v1h-1zM83 120h2v1h-2zM84 121h1v1h-1zM84 122h2v1h-2zM85 123h1v1h-1zM85 124h2v1h-2zM85 125h2v1h-2zM85 126h2v1h-2zM85 127h2v1h-2zM85 128h2v1h-2zM85 129h2v1h-2zM66 130h1v1h-1zM85 130h2v1h-2zM66 131h2v1h-2zM85 131h2v1h-2zM67 132h2v1h-2zM86 132h1v1h-1zM102 132h1v1h-1zM68 133h1v1h-1zM74 133h2v1h-2zM86 133h1v1h-1zM101 133h3v1h-3zM68 134h1v1h-1zM74 134h3v1h-3zM86 134h1v1h-1zM101 134h3v1h-3zM75 135h2v1h-2zM86 135h1v1h-1zM100 135h3v1h-3zM75 136h3v1h-3zM86 136h1v1h-1zM100 136h3v1h-3zM76 137h3v1h-3zM86 137h1v1h-1zM100 137h2v1h-2zM105 137h8v1h-8zM77 138h2v1h-2zM86 138h1v1h-1zM92 138h2v1h-2zM99 138h3v1h-3zM105 138h8v1h-8zM77 139h3v1h-3zM86 139h1v1h-1zM92 139h2v1h-2zM99 139h2v1h-2zM104 139h3v1h-3zM108 139h5v1h-5zM78 140h3v1h-3zM86 140h1v1h-1zM93 140h2v1h-2zM98 140h3v1h-3zM103 140h3v1h-3zM79 141h2v1h-2zM86 141h1v1h-1zM93 141h2v1h-2zM98 141h3v1h-3zM103 141h2v1h-2zM79 142h3v1h-3zM86 142h1v1h-1zM93 142h2v1h-2zM97 142h3v1h-3zM104 142h1v1h-1zM80 143h3v1h-3zM86 143h1v1h-1zM94 143h2v1h-2zM97 143h3v1h-3zM81 144h3v1h-3zM86 144h2v1h-2zM90 144h9v1h-9zM82 145h2v1h-2zM86 145h2v1h-2zM90 145h9v1h-9zM86 146h2v1h-2zM92 146h6v1h-6zM87 147h1v1h-1zM93 147h5v1h-5zM87 148h2v1h-2zM93 148h4v1h-4zM87 149h2v1h-2zM93 149h4v1h-4zM86 150h3v1h-3zM93 150h3v1h-3zM85 151h4v1h-4zM93 151h3v1h-3zM85 152h4v1h-4zM92 152h3v1h-3zM85 153h4v1h-4zM92 153h3v1h-3zM85 154h1v1h-1zM87 154h3v1h-3zM93 154h1v1h-1zM85 155h5v1h-5zM85 156h5v1h-5zM85 157h2v1h-2zM88 157h2v1h-2zM85 158h6v1h-6zM86 159h4v1h-4zM86 160h1v1h-1zM88 160h1v1h-1zM86 161h3v1h-3zM94 161h1v1h-1zM86 162h3v1h-3zM94 162h1v1h-1zM86 163h2v1h-2zM89 163h1v1h-1zM94 163h2v1h-2zM86 164h4v1h-4zM94 164h2v1h-2zM86 165h4v1h-4zM94 165h2v1h-2zM86 166h1v1h-1zM88 166h2v1h-2zM94 166h2v1h-2zM86 167h4v1h-4zM94 167h2v1h-2zM86 168h4v1h-4zM94 168h2v1h-2zM87 169h4v1h-4zM94 169h2v1h-2zM87 170h2v1h-2zM90 170h6v1h-6zM87 171h9v1h-9zM87 172h9v1h-9zM87 173h2v1h-2zM90 173h6v1h-6zM88 174h4v1h-4zM95 174h1v1h-1zM88 175h4v1h-4zM88 176h2v1h-2zM91 176h1v1h-1zM88 177h4v1h-4zM88 178h1v1h-1zM90 178h2v1h-2zM88 179h4v1h-4zM88 180h4v1h-4zM88 181h4v1h-4zM88 182h4v1h-4zM88 183h4v1h-4zM89 184h3v1h-3zM89 185h3v1h-3zM89 186h3v1h-3zM89 187h3v1h-3zM90 188h3v1h-3zM90 189h3v1h-3zM90 190h3v1h-3zM90 191h3v1h-3zM90 192h3v1h-3zM90 193h3v1h-3zM90 194h3v1h-3zM90 195h3v1h-3zM90 196h3v1h-3zM90 197h3v1h-3zM90 198h3v1h-3zM92 199h1v1h-1z"/>
<path fill="#72442f" d="M65 85h1v1h-1zM66 86h1v1h-1zM66 87h2v1h-2zM67 88h2v1h-2zM68 89h1v1h-1zM69 90h1v1h-1zM69 91h2v1h-2zM70 92h2v1h-2zM71 93h1v1h-1zM72 94h1v1h-1zM72 95h2v1h-2zM73 96h2v1h-2zM80 96h2v1h-2zM74 97h2v1h-2zM80 97h3v1h-3zM75 98h2v1h-2zM80 98h3v1h-3zM76 99h1v1h-1zM81 99h2v1h-2zM77 100h1v1h-1zM81 100h2v1h-2zM78 101h1v1h-1zM82 101h1v1h-1zM79 102h1v1h-1zM81 102h2v1h-2zM81 103h2v1h-2zM81 104h2v1h-2zM81 105h2v1h-2zM81 106h2v1h-2zM81 107h2v1h-2zM81 108h3v1h-3zM82 109h2v1h-2zM82 110h2v1h-2zM82 111h2v1h-2zM82 112h2v1h-2zM82 113h3v1h-3zM82 114h3v1h-3zM83 115h2v1h-2zM83 116h2v1h-2zM83 117h3v1h-3zM84 118h2v1h-2zM84 119h3v1h-3zM85 120h2v1h-2zM85 121h3v1h-3zM86 122h2v1h-2zM86 123h3v1h-3zM87 124h2v1h-2zM87 125h2v1h-2zM87 126h2v1h-2zM87 127h2v1h-2zM87 128h2v1h-2zM87 129h2v1h-2zM87 130h2v1h-2zM87 131h2v1h-2zM76 132h2v1h-2zM87 132h2v1h-2zM76 133h3v1h-3zM87 133h2v1h-2zM77 134h2v1h-2zM87 134h2v1h-2zM77 135h3v1h-3zM87 135h2v1h-2zM78 136h3v1h-3zM87 136h2v1h-2zM79 137h2v1h-2zM87 137h2v1h-2zM79 138h3v1h-3zM87 138h2v1h-2zM80 139h3v1h-3zM87 139h2v1h-2zM81 140h2v1h-2zM87 140h2v1h-2zM81 141h3v1h-3zM87 141h3v1h-3zM82 142h3v1h-3zM87 142h3v1h-3zM83 143h2v1h-2zM87 143h3v1h-3zM84 144h1v1h-1zM88 144h2v1h-2zM88 145h2v1h-2zM88 146h2v1h-2zM88 147h3v1h-3zM89 148h2v1h-2zM89 149h1v1h-1zM86 154h1v1h-1zM94 155h2v1h-2zM94 156h2v1h-2zM87 157h1v1h-1zM94 157h2v1h-2zM94 158h2v1h-2zM94 159h2v1h-2zM87 160h1v1h-1zM94 160h2v1h-2zM95 161h2v1h-2zM95 162h2v1h-2zM88 163h1v1h-1zM96 163h1v1h-1zM96 164h1v1h-1zM96 165h1v1h-1zM87 166h1v1h-1zM96 166h1v1h-1zM96 167h2v1h-2zM96 168h2v1h-2zM96 169h2v1h-2zM89 170h1v1h-1zM96 170h3v1h-3zM96 171h3v1h-3zM96 172h4v1h-4zM89 173h1v1h-1zM96 173h4v1h-4zM96 174h4v1h-4zM96 175h5v1h-5zM90 176h1v1h-1zM96 176h5v1h-5zM96 177h5v1h-5zM89 178h1v1h-1zM96 178h5v1h-5zM96 179h5v1h-5zM92 180h1v1h-1zM95 180h6v1h-6zM92 181h9v1h-9zM92 182h9v1h-9zM92 183h9v1h-9zM92 184h9v1h-9zM92 185h9v1h-9zM92 186h9v1h-9zM92 187h9v1h-9zM93 188h8v1h-8zM93 189h9v1h-9zM93 190h9v1h-9zM93 191h9v1h-9zM93 192h9v1h-9zM93 193h9v1h-9zM93 194h9v1h-9zM93 195h9v1h-9zM93 196h9v1h-9zM93 197h9v1h-9zM93 198h9v1h-9zM93 199h9v1h-9zM93 200h5v1h-5zM94 201h3v1h-3z"/>
<path fill="#a46a4c" d="M62 62h1v1h-1zM62 63h2v1h-2zM63 64h2v1h-2zM64 65h2v1h-2zM65 66h2v1h-2zM66 67h2v1h-2zM86 67h1v1h-1zM67 68h2v1h-2zM85 68h2v1h-2zM68 69h2v1h-2zM85 69h2v1h-2zM69 70h2v1h-2zM84 70h2v1h-2zM70 71h2v1h-2zM83 71h2v1h-2zM71 72h2v1h-2zM83 72h1v1h-1zM72 73h2v1h-2zM82 73h2v1h-2zM73 74h2v1h-2zM81 74h2v1h-2zM74 75h2v1h-2zM81 75h1v1h-1zM75 76h2v1h-2zM80 76h2v1h-2zM76 77h2v1h-2zM77 78h2v1h-2zM78 79h3v1h-3zM79 80h2v1h-2zM79 81h2v1h-2zM79 82h2v1h-2zM79 83h2v1h-2zM79 84h2v1h-2zM79 85h2v1h-2zM79 86h2v1h-2zM79 87h2v1h-2zM79 88h2v1h-2zM79 89h2v1h-2zM79 90h2v1h-2zM79 91h2v1h-2zM79 92h2v1h-2zM79 93h2v1h-2zM79 94h2v1h-2zM79 95h2v1h-2zM76 103h1v1h-1zM76 104h3v1h-3zM76 105h3v1h-3zM77 106h3v1h-3zM77 107h3v1h-3zM77 108h3v1h-3zM77 109h3v1h-3zM77 110h3v1h-3zM77 111h3v1h-3zM78 112h2v1h-2zM78 113h3v1h-3zM78 114h3v1h-3zM78 115h3v1h-3zM78 116h3v1h-3zM78 117h4v1h-4zM79 118h3v1h-3zM79 119h4v1h-4zM80 120h3v1h-3zM80 121h4v1h-4zM81 122h3v1h-3zM82 123h3v1h-3zM82 124h3v1h-3zM82 125h3v1h-3zM82 126h3v1h-3zM82 127h3v1h-3zM82 128h3v1h-3zM82 129h3v1h-3zM82 130h3v1h-3zM83 131h2v1h-2zM83 132h3v1h-3zM83 133h3v1h-3zM104 133h1v1h-1zM83 134h3v1h-3zM104 134h2v1h-2zM83 135h3v1h-3zM103 135h2v1h-2zM83 136h3v1h-3zM103 136h2v1h-2zM83 137h3v1h-3zM102 137h2v1h-2zM83 138h3v1h-3zM102 138h2v1h-2zM83 139h3v1h-3zM101 139h2v1h-2zM83 140h3v1h-3zM101 140h2v1h-2zM84 141h2v1h-2zM101 141h1v1h-1zM85 142h1v1h-1zM100 142h2v1h-2zM85 143h1v1h-1zM100 143h2v1h-2zM85 144h1v1h-1zM99 144h2v1h-2zM84 145h2v1h-2zM99 145h2v1h-2zM83 146h3v1h-3zM98 146h2v1h-2zM84 147h3v1h-3zM98 147h2v1h-2zM84 148h3v1h-3zM97 148h2v1h-2zM84 149h3v1h-3zM97 149h2v1h-2zM85 150h1v1h-1zM96 150h2v1h-2zM96 151h2v1h-2zM95 152h2v1h-2zM95 153h2v1h-2zM94 154h2v1h-2zM90 159h1v1h-1zM89 160h5v1h-5zM89 161h5v1h-5zM89 162h5v1h-5zM90 163h4v1h-4zM90 164h4v1h-4zM90 165h4v1h-4zM90 166h4v1h-4zM90 167h4v1h-4zM90 168h4v1h-4zM91 169h3v1h-3zM92 174h3v1h-3zM92 175h4v1h-4zM92 176h4v1h-4zM92 177h4v1h-4zM92 178h4v1h-4zM92 179h4v1h-4zM93 180h2v1h-2z"/>
<path fill="#663824" d="M64 60h2v1h-2zM64 61h3v1h-3zM65 62h3v1h-3zM66 63h3v1h-3zM67 64h3v1h-3zM68 65h3v1h-3zM69 66h3v1h-3zM70 67h3v1h-3zM71 68h3v1h-3zM72 69h3v1h-3zM73 70h3v1h-3zM74 71h3v1h-3zM75 72h3v1h-3zM76 73h3v1h-3zM77 74h3v1h-3zM78 75h3v1h-3zM79 76h1v1h-1zM80 77h2v1h-2zM67 83h1v1h-1zM66 84h3v1h-3zM66 85h3v1h-3zM67 86h3v1h-3zM68 87h3v1h-3zM69 88h3v1h-3zM69 89h3v1h-3zM70 90h3v1h-3zM71 91h3v1h-3zM72 92h3v1h-3zM72 93h3v1h-3zM73 94h3v1h-3zM74 95h3v1h-3zM75 96h3v1h-3zM76 97h3v1h-3zM77 98h3v1h-3zM77 99h4v1h-4zM78 100h3v1h-3zM79 101h3v1h-3zM90 146h2v1h-2zM91 147h2v1h-2zM91 148h2v1h-2zM90 149h3v1h-3zM89 150h4v1h-4zM89 151h4v1h-4zM89 152h3v1h-3zM89 153h3v1h-3zM90 154h3v1h-3zM90 155h4v1h-4zM90 156h4v1h-4zM90 157h4v1h-4zM91 158h3v1h-3zM91 159h3v1h-3z"/>
<path fill="#a62f30" d="M94 48h3v1h-3zM94 49h3v1h-3zM94 50h2v1h-2zM96 52h3v1h-3zM94 53h6v1h-6zM93 54h8v1h-8zM93 55h8v1h-8zM93 56h8v1h-8zM93 57h8v1h-8zM93 58h7v1h-7zM94 59h6v1h-6zM44 70h4v1h-4zM43 71h6v1h-6zM42 72h8v1h-8zM41 73h9v1h-9zM41 74h9v1h-9zM41 75h9v1h-9zM42 76h8v1h-8zM42 77h8v1h-8zM43 78h5v1h-5zM109 111h2v1h-2zM108 112h5v1h-5zM107 113h6v1h-6zM107 114h7v1h-7zM107 115h7v1h-7zM108 116h5v1h-5zM109 117h3v1h-3zM80 123h1v1h-1zM75 124h6v1h-6zM76 125h4v1h-4zM124 125h3v1h-3zM121 126h6v1h-6zM122 127h5v1h-5zM49 130h4v1h-4zM49 131h5v1h-5zM48 132h6v1h-6zM48 133h6v1h-6zM49 134h5v1h-5zM50 135h3v1h-3z"/>
<path fill="#7a2640" d="M95 44h4v1h-4zM81 45h4v1h-4zM93 45h5v1h-5zM81 46h5v1h-5zM93 46h6v1h-6zM82 47h4v1h-4zM94 47h5v1h-5zM83 48h1v1h-1zM98 48h1v1h-1zM99 49h1v1h-1zM99 52h1v1h-1zM100 53h1v1h-1zM101 54h1v1h-1zM101 55h2v1h-2zM101 56h2v1h-2zM101 57h2v1h-2zM100 58h2v1h-2zM93 59h1v1h-1zM100 59h2v1h-2zM94 60h7v1h-7zM96 61h3v1h-3zM48 70h2v1h-2zM49 71h2v1h-2zM50 72h2v1h-2zM50 73h2v1h-2zM50 74h2v1h-2zM50 75h2v1h-2zM41 76h1v1h-1zM50 76h2v1h-2zM50 77h1v1h-1zM48 78h3v1h-3zM44 79h5v1h-5zM110 109h3v1h-3zM108 110h7v1h-7zM106 111h3v1h-3zM111 111h5v1h-5zM106 112h2v1h-2zM113 112h3v1h-3zM105 113h2v1h-2zM113 113h4v1h-4zM105 114h2v1h-2zM114 114h3v1h-3zM105 115h2v1h-2zM114 115h3v1h-3zM105 116h3v1h-3zM113 116h4v1h-4zM105 117h4v1h-4zM112 117h5v1h-5zM105 118h11v1h-11zM106 119h10v1h-10zM107 120h7v1h-7zM110 121h2v1h-2zM125 121h3v1h-3zM126 122h3v1h-3zM73 123h1v1h-1zM81 123h1v1h-1zM127 123h3v1h-3zM73 124h2v1h-2zM81 124h1v1h-1zM128 124h3v1h-3zM74 125h2v1h-2zM80 125h2v1h-2zM119 125h2v1h-2zM128 125h3v1h-3zM74 126h7v1h-7zM119 126h2v1h-2zM128 126h3v1h-3zM76 127h4v1h-4zM119 127h2v1h-2zM129 127h2v1h-2zM49 128h7v1h-7zM119 128h1v1h-1zM129 128h2v1h-2zM48 129h9v1h-9zM47 130h2v1h-2zM53 130h5v1h-5zM124 130h3v1h-3zM46 131h3v1h-3zM54 131h4v1h-4zM124 131h3v1h-3zM46 132h2v1h-2zM54 132h5v1h-5zM124 132h3v1h-3zM46 133h2v1h-2zM54 133h5v1h-5zM46 134h3v1h-3zM54 134h5v1h-5zM46 135h4v1h-4zM53 135h5v1h-5zM46 136h12v1h-12zM47 137h10v1h-10zM48 138h8v1h-8zM49 139h6v1h-6z"/>
<path fill="#45203a" d="M98 45h2v1h-2zM99 46h2v1h-2zM99 47h2v1h-2zM99 48h2v1h-2zM100 49h1v1h-1zM101 53h1v1h-1zM102 54h1v1h-1zM102 58h1v1h-1zM102 59h1v1h-1zM101 60h1v1h-1zM95 61h1v1h-1zM99 61h2v1h-2zM97 62h2v1h-2zM52 73h1v1h-1zM52 74h1v1h-1zM52 75h1v1h-1zM52 76h1v1h-1zM51 77h1v1h-1zM42 78h1v1h-1zM51 78h1v1h-1zM43 79h1v1h-1zM49 79h2v1h-2zM44 80h6v1h-6zM116 112h1v1h-1zM117 113h1v1h-1zM117 114h1v1h-1zM117 115h1v1h-1zM117 116h1v1h-1zM117 117h1v1h-1zM116 118h2v1h-2zM116 119h1v1h-1zM106 120h1v1h-1zM114 120h2v1h-2zM108 121h2v1h-2zM112 121h3v1h-3zM110 122h3v1h-3zM58 131h1v1h-1zM58 135h1v1h-1zM58 136h1v1h-1zM57 137h2v1h-2zM47 138h1v1h-1zM56 138h2v1h-2zM48 139h1v1h-1zM55 139h2v1h-2zM50 140h6v1h-6z"/>
</svg>
<div style="left:1072px;top:0px;width:8px;height:728px;background:#000;"></div>
<div style="left:1074px;top:177px;width:6px;height:367px;background:#40434b;"></div>
<div style="left:0px;top:714px;width:1080px;height:14px;background:#000;"></div>
<div style="left:345px;top:716px;width:249px;height:10px;background:#40434b;border-radius:3px 0 0 3px;"></div>
<div style="left:0px;top:728px;width:1080px;height:2px;background:#454952;"></div>
<div style="left:0px;top:730px;width:1080px;height:2px;background:#000;"></div>
<div style="left:0px;top:732px;width:1080px;height:38px;background:#333333;"></div>
<div style="left:0px;top:770px;width:1080px;height:2px;background:#000;"></div>
<div style="left:0px;top:772px;width:1080px;height:122px;background:#2b2b30;"></div>
<div style="left:-6px;top:740px;width:162px;height:23.5px;background:#000;border-radius:2px;"></div>
<div style="left:-4px;top:763.5px;width:158px;height:2px;background:#2a2a2b;"></div>
<div style="left:-4px;top:741.8px;width:30px;height:18.2px;background:#2b2c31;box-shadow:inset 0 0 0 2px #3a3d44;"></div>
<svg style="left:-4px;top:740px" width="30" height="24" viewBox="0 0 30 24"><rect x="10" y="5.9" width="2" height="10.4" fill="#cfcdc7"/><path d="M20 5.9V16.3L14 11.1z" fill="#cfcdc7"/></svg>
<div style="left:28px;top:741.8px;width:30px;height:18.2px;background:#2b2c31;box-shadow:inset 0 0 0 2px #3a3d44;"></div>
<svg style="left:28px;top:740px" width="30" height="24" viewBox="0 0 30 24"><path d="M16 5.9V16.3L10 11.1z" fill="#cfcdc7"/><rect x="18" y="5.9" width="2" height="10.4" fill="#cfcdc7"/></svg>
<div style="left:60px;top:741.8px;width:30px;height:18.2px;background:#2b2c31;box-shadow:inset 0 0 0 2px #3a3d44;"></div>
<svg style="left:60px;top:740px" width="30" height="24" viewBox="0 0 30 24"><path d="M12 5.9V16.3L18 11.1z" fill="#cfcdc7"/></svg>
<div style="left:92px;top:741.8px;width:30px;height:18.2px;background:#2b2c31;box-shadow:inset 0 0 0 2px #3a3d44;"></div>
<svg style="left:92px;top:740px" width="30" height="24" viewBox="0 0 30 24"><rect x="10" y="5.9" width="2" height="10.4" fill="#cfcdc7"/><path d="M14 5.9V16.3L20 11.1z" fill="#cfcdc7"/></svg>
<div style="left:124px;top:741.8px;width:30px;height:18.2px;background:#2b2c31;box-shadow:inset 0 0 0 2px #3a3d44;"></div>
<svg style="left:124px;top:740px" width="30" height="24" viewBox="0 0 30 24"><path d="M10 5.9V16.3L16 11.1z" fill="#cfcdc7"/><rect x="18" y="5.9" width="2" height="10.4" fill="#cfcdc7"/></svg>
<div style="left:0px;top:772px;width:318px;height:48px;background:#000;"></div>
<div style="left:0px;top:772px;width:18px;height:21px;background:#2b2b30;"></div>
<div style="left:20px;top:772px;width:22px;height:21px;background:#2b2b30;"></div>
<div style="left:44px;top:772px;width:22px;height:21px;background:#2b2b30;"></div>
<div style="left:68px;top:772px;width:22px;height:21px;background:#2b2b30;"></div>
<div style="left:92px;top:772px;width:22px;height:21px;background:#2b2b30;"></div>
<div style="left:116px;top:772px;width:176px;height:21px;background:#2b2b30;"></div>
<div style="left:294px;top:772px;width:22px;height:21px;background:#212226;"></div>
<div style="left:0px;top:796px;width:18px;height:22px;background:#26272b;"></div>
<div style="left:20px;top:796px;width:22px;height:22px;background:#26272b;"></div>
<div style="left:44px;top:796px;width:22px;height:22px;background:#26272b;"></div>
<div style="left:318px;top:794px;width:2px;height:26px;background:#17181b;"></div>
<div style="left:66px;top:794px;width:252px;height:26px;background:#5a87c5;"></div>
<div style="left:68px;top:796px;width:248px;height:22px;background:#000;"></div>
<div style="left:70px;top:798px;width:222px;height:18px;background:#222327;"></div>
<div style="left:294px;top:798px;width:20px;height:18px;background:#3f6dc8;"></div>
<div style="left:297.5px;top:799.8px;width:14.5px;height:14.5px;background:#cbc9c3;border-radius:7.5px;"></div>
<svg style="left:0px;top:772px" width="118" height="48" viewBox="0 0 118 48"><path d="M-2 11q2 -5 8 -5t8 5q-2 4 -8 4t-8 -4z" fill="none" stroke="#52646e" stroke-width="2.2"/><rect x="4" y="8" width="5" height="4" fill="#52646e"/><rect x="2" y="17" width="9" height="2" fill="#52646e"/><rect x="24" y="10" width="12" height="8" fill="#52646e"/><path d="M27 10v-4q0 -3 3 -3t3 2" fill="none" stroke="#52646e" stroke-width="2"/><rect x="29" y="12" width="2" height="4" fill="#2b2c31"/><path d="M46 10.5l4 -4.5 4 4.5 -4 4.5z" fill="#52646e"/><rect x="47" y="7.5" width="6" height="6" fill="#52646e"/><path d="M56 10.5l4 -4.5 4 4.5 -4 4.5z" fill="#52646e"/><rect x="57" y="7.5" width="6" height="6" fill="#52646e"/><rect x="72" y="4" width="14" height="2" fill="#52646e"/><rect x="72" y="10" width="14" height="2" fill="#52646e"/><rect x="72" y="16" width="14" height="2" fill="#52646e"/><rect x="80" y="2" width="4" height="6" fill="#d0cec8"/><rect x="74" y="8" width="4" height="6" fill="#d0cec8"/><rect x="78" y="14" width="4" height="6" fill="#d0cec8"/><rect x="100" y="8" width="10" height="10" fill="none" stroke="#232428" stroke-width="2"/><rect x="97" y="5" width="9" height="9" fill="#2b2c31" stroke="#52646e" stroke-width="2"/><path d="M-2 35q2 -5 8 -5t8 5q-2 4 -8 4t-8 -4z" fill="none" stroke="#d0cec8" stroke-width="2.2"/><rect x="4" y="32" width="5" height="4" fill="#d0cec8"/><rect x="2" y="41" width="9" height="2" fill="#d0cec8"/><rect x="24" y="34" width="12" height="8" fill="#d0cec8"/><path d="M27 34v-4q0 -3 3 -3t3 2" fill="none" stroke="#d0cec8" stroke-width="2"/><rect x="29" y="36" width="2" height="4" fill="#26272b"/><path d="M46 34.5l4 -4.5 4 4.5 -4 4.5z" fill="#d0cec8"/><rect x="47" y="31.5" width="6" height="6" fill="#d0cec8"/><path d="M56 34.5l4 -4.5 4 4.5 -4 4.5z" fill="#d0cec8"/><rect x="57" y="31.5" width="6" height="6" fill="#d0cec8"/></svg>
<div style="left:593px;top:0px;width:454px;height:886px;background:#000;"></div>
<div style="left:595px;top:2px;width:450px;height:882px;background:#202125;"></div>
<div style="left:595px;top:2px;width:450px;height:878px;background:#42464e;"></div>
<div style="left:597px;top:28px;width:446px;height:850px;background:#323338;"></div>
<div style="left:599px;top:28px;width:442px;height:848px;background:#2b2b30;"></div>
<div style="left:595px;top:2px;width:450px;height:26px;background:#40434b;"></div>
<div style="left:595px;top:2px;width:450px;height:2px;background:#5b5f69;"></div>
<div style="left:595px;top:4px;width:2px;height:24px;background:#4e525b;"></div>
<div style="left:1043px;top:4px;width:2px;height:24px;background:#4e525b;"></div>
<div style="left:1023px;top:6px;width:18px;height:19px;background:#000;border-radius:2px;"></div>
<div style="left:1025px;top:8px;width:14px;height:13px;background:#40434b;"></div>
<svg style="left:1025px;top:8px" width="14" height="13" viewBox="0 0 14 13"><path d="M3 2.5l8 8M11 2.5l-8 8" stroke="#e4e2dc" stroke-width="2"/></svg>
<div style="left:620.8px;top:34px;width:397.8px;height:27.8px;background:#000;border-radius:2px;"></div>
<div style="left:622.5px;top:61.8px;width:395px;height:2.2px;background:#1e1f23;"></div>
<div style="left:623.2px;top:36px;width:51.19999999999993px;height:22.6px;background:#2b2c31;box-shadow:inset 0 0 0 2px #3d4047;"></div>
<div style="left:676.8000000000001px;top:36px;width:59.69999999999993px;height:22.6px;background:#40434b;box-shadow:inset 0 0 0 2px #50545d;"></div>
<div style="left:738.9000000000001px;top:36px;width:97.89999999999986px;height:22.6px;background:#2b2c31;box-shadow:inset 0 0 0 2px #3d4047;"></div>
<div style="left:839.2px;top:36px;width:59.59999999999991px;height:22.6px;background:#2b2c31;box-shadow:inset 0 0 0 2px #3d4047;"></div>
<div style="left:901.2px;top:36px;width:59.09999999999991px;height:22.6px;background:#2b2c31;box-shadow:inset 0 0 0 2px #3d4047;"></div>
<div style="left:962.7px;top:36px;width:53.499999999999886px;height:22.6px;background:#2b2c31;box-shadow:inset 0 0 0 2px #3d4047;"></div>
<div style="left:605px;top:48px;width:4px;height:2px;background:#3a3c43;"></div>
<div style="left:610.5px;top:48px;width:2.5px;height:2px;background:#3a3c43;"></div>
<div style="left:1027px;top:48px;width:4px;height:2px;background:#3a3c43;"></div>
<div style="left:1032.5px;top:48px;width:2.5px;height:2px;background:#3a3c43;"></div>
<div style="left:753px;top:74.5px;width:280px;height:25.5px;background:#41454d;border-radius:2px;"></div>
<div style="left:755px;top:76.5px;width:276px;height:21.5px;background:#2b2c31;"></div>
<div style="left:755px;top:76.5px;width:276px;height:21.5px;background:#000;"></div>
<div style="left:757px;top:78.5px;width:272px;height:17.5px;background:#2b2c31;"></div>
<div style="left:753px;top:112px;width:279.5px;height:25.5px;background:#000;border-radius:2px;"></div>
<div style="left:755px;top:114px;width:275.5px;height:17.5px;background:#5a5e68;"></div>
<div style="left:755px;top:131.5px;width:275.5px;height:2px;background:#4a4d56;"></div>
<div style="left:755px;top:114px;width:275.5px;height:17.5px;background:#40434b;"></div>
<div style="left:755px;top:131.5px;width:275.5px;height:2px;background:#393b42;"></div>
<div style="left:755px;top:114px;width:275.5px;height:1px;background:#60646e;"></div>
<div style="left:753px;top:152px;width:133.5px;height:25.5px;background:#000;border-radius:2px;"></div>
<div style="left:755px;top:154px;width:129.5px;height:17.5px;background:#5a5e68;"></div>
<div style="left:755px;top:171.5px;width:129.5px;height:2px;background:#4a4d56;"></div>
<div style="left:755px;top:154px;width:17.0px;height:17.5px;background:#40434b;"></div>
<div style="left:755px;top:171.5px;width:17.0px;height:2px;background:#393b42;"></div>
<div style="left:755px;top:154px;width:129.5px;height:1px;background:#60646e;"></div>
<div style="left:899.5px;top:152px;width:132.5px;height:25.5px;background:#000;border-radius:2px;"></div>
<div style="left:901.5px;top:154px;width:128.5px;height:17.5px;background:#5a5e68;"></div>
<div style="left:901.5px;top:171.5px;width:128.5px;height:2px;background:#4a4d56;"></div>
<div style="left:901.5px;top:154px;width:84.5px;height:17.5px;background:#40434b;"></div>
<div style="left:901.5px;top:171.5px;width:84.5px;height:2px;background:#393b42;"></div>
<div style="left:901.5px;top:154px;width:128.5px;height:1px;background:#60646e;"></div>
<div style="left:753px;top:192px;width:279.5px;height:25.5px;background:#000;border-radius:2px;"></div>
<div style="left:755px;top:194px;width:275.5px;height:17.5px;background:#5a5e68;"></div>
<div style="left:755px;top:211.5px;width:275.5px;height:2px;background:#4a4d56;"></div>
<div style="left:755px;top:194px;width:95.0px;height:17.5px;background:#40434b;"></div>
<div style="left:755px;top:211.5px;width:95.0px;height:2px;background:#393b42;"></div>
<div style="left:755px;top:194px;width:275.5px;height:1px;background:#60646e;"></div>
<div style="left:753px;top:232px;width:279.5px;height:25.5px;background:#000;border-radius:2px;"></div>
<div style="left:755px;top:234px;width:275.5px;height:17.5px;background:#5a5e68;"></div>
<div style="left:755px;top:251.5px;width:275.5px;height:2px;background:#4a4d56;"></div>
<div style="left:755px;top:234px;width:36.0px;height:17.5px;background:#40434b;"></div>
<div style="left:755px;top:251.5px;width:36.0px;height:2px;background:#393b42;"></div>
<div style="left:755px;top:234px;width:275.5px;height:1px;background:#60646e;"></div>
<div style="left:757px;top:275.7px;width:12px;height:9px;background:#08080a;border-radius:6px;"></div>
<div style="left:757px;top:278.6px;width:12px;height:9.6px;background:#3e4047;border-radius:6px/5px;"></div>
<div style="left:757px;top:278.2px;width:12px;height:8px;background:#34363b;border-radius:6px/4.5px;"></div>
<div style="left:872.5px;top:275.7px;width:12px;height:9px;background:#08080a;border-radius:6px;"></div>
<div style="left:872.5px;top:278.6px;width:12px;height:9.6px;background:#3e4047;border-radius:6px/5px;"></div>
<div style="left:872.5px;top:278.2px;width:12px;height:8px;background:#34363b;border-radius:6px/4.5px;"></div>
<div style="left:954.5px;top:274px;width:16px;height:15px;background:#000;border-radius:8px;"></div>
<div style="left:956.5px;top:276px;width:12px;height:11px;background:#2e3035;border-radius:6px;"></div>
<div style="left:959.5px;top:279px;width:6px;height:5px;background:#393b42;border-radius:3px;"></div>
<div style="left:606px;top:446.3px;width:428px;height:2px;background:repeating-linear-gradient(90deg,#36383e 0 3.5px,transparent 3.5px 5.9px);"></div>
<div style="left:606px;top:729.7px;width:428px;height:2px;background:repeating-linear-gradient(90deg,#36383e 0 3.5px,transparent 3.5px 5.9px);"></div>
<div style="left:606px;top:828px;width:428px;height:2px;background:repeating-linear-gradient(90deg,#36383e 0 3.5px,transparent 3.5px 5.9px);"></div>
<div style="left:729px;top:484px;width:305px;height:27.6px;background:#000;border-radius:4px;"></div>
<div style="left:731px;top:509px;width:301px;height:4px;background:#1e1f23;border-radius:2px;"></div>
<div style="left:729px;top:484px;width:305px;height:27.6px;background:#000;border-radius:4px;"></div>
<div style="left:731px;top:486px;width:301px;height:23.8px;background:#78896b;border-radius:3px;"></div>
<div style="left:731px;top:486px;width:301px;height:22.3px;background:#dde6d4;border-radius:3px;"></div>
<div style="left:733px;top:488px;width:297px;height:18px;background:#4a692f;border-radius:1px;"></div>
<div style="left:729px;top:522px;width:147px;height:27.6px;background:#000;border-radius:4px;"></div>
<div style="left:731px;top:547px;width:143px;height:4px;background:#1e1f23;border-radius:2px;"></div>
<div style="left:729px;top:522px;width:147px;height:27.6px;background:#000;border-radius:4px;"></div>
<div style="left:731px;top:524px;width:143px;height:23.8px;background:#78896b;border-radius:3px;"></div>
<div style="left:731px;top:524px;width:143px;height:22.3px;background:#dde6d4;border-radius:3px;"></div>
<div style="left:733px;top:526px;width:139px;height:18px;background:#5c7843;border-radius:1px;"></div>
<div style="left:885.5px;top:522px;width:148.5px;height:27.6px;background:#000;border-radius:4px;"></div>
<div style="left:887.5px;top:547px;width:144.5px;height:4px;background:#1e1f23;border-radius:2px;"></div>
<div style="left:885.5px;top:522px;width:148.5px;height:27.6px;background:#000;border-radius:4px;"></div>
<div style="left:887.5px;top:524px;width:144.5px;height:23.8px;background:#78896b;border-radius:3px;"></div>
<div style="left:887.5px;top:524px;width:144.5px;height:22.3px;background:#dde6d4;border-radius:3px;"></div>
<div style="left:889.5px;top:526px;width:140.5px;height:18px;background:#3b5425;border-radius:1px;"></div>
<div style="left:729px;top:560px;width:147px;height:27.6px;background:#000;border-radius:4px;"></div>
<div style="left:731px;top:585px;width:143px;height:4px;background:#1e1f23;border-radius:2px;"></div>
<div style="left:729px;top:560px;width:147px;height:27.6px;background:#000;border-radius:4px;"></div>
<div style="left:731px;top:562px;width:143px;height:23.8px;background:#8c6f62;border-radius:3px;"></div>
<div style="left:731px;top:562px;width:143px;height:22.3px;background:#f0ddd3;border-radius:3px;"></div>
<div style="left:733px;top:564px;width:139px;height:18px;background:#8f563b;border-radius:1px;"></div>
<div style="left:885.5px;top:560px;width:148.5px;height:27.6px;background:#000;border-radius:4px;"></div>
<div style="left:887.5px;top:585px;width:144.5px;height:4px;background:#1e1f23;border-radius:2px;"></div>
<div style="left:885.5px;top:560px;width:148.5px;height:27.6px;background:#000;border-radius:4px;"></div>
<div style="left:887.5px;top:562px;width:144.5px;height:23.8px;background:#8c6f62;border-radius:3px;"></div>
<div style="left:887.5px;top:562px;width:144.5px;height:22.3px;background:#f0ddd3;border-radius:3px;"></div>
<div style="left:889.5px;top:564px;width:140.5px;height:18px;background:#72442f;border-radius:1px;"></div>
<div style="left:733px;top:602px;width:14px;height:13px;background:#222327;border-radius:2px;"></div>
<div style="left:735px;top:604px;width:10px;height:9px;background:#2b2b30;"></div>
<div style="left:901px;top:602px;width:14px;height:13px;background:#222327;border-radius:2px;"></div>
<div style="left:903px;top:604px;width:10px;height:9px;background:#2b2b30;"></div>
<div style="left:733px;top:634px;width:14px;height:13px;background:#222327;border-radius:2px;"></div>
<div style="left:735px;top:636px;width:10px;height:9px;background:#2b2b30;"></div>
<div style="left:733px;top:666px;width:16px;height:15px;background:#000;border-radius:8px;"></div>
<div style="left:735px;top:668px;width:12px;height:11px;background:#2e3035;border-radius:6px;"></div>
<div style="left:738px;top:671px;width:6px;height:5px;background:#393b42;border-radius:3px;"></div>
<div style="left:735px;top:699.7px;width:12px;height:9px;background:#08080a;border-radius:6px;"></div>
<div style="left:735px;top:702.6px;width:12px;height:9.6px;background:#3e4047;border-radius:6px/5px;"></div>
<div style="left:735px;top:702.2px;width:12px;height:8px;background:#34363b;border-radius:6px/4.5px;"></div>
<div style="left:898.5px;top:699.7px;width:12px;height:9px;background:#08080a;border-radius:6px;"></div>
<div style="left:898.5px;top:702.6px;width:12px;height:9.6px;background:#3e4047;border-radius:6px/5px;"></div>
<div style="left:898.5px;top:702.2px;width:12px;height:8px;background:#34363b;border-radius:6px/4.5px;"></div>
<div style="left:731px;top:744px;width:277px;height:28px;background:#41454d;border-radius:2px;"></div>
<div style="left:733px;top:746px;width:273px;height:24px;background:#2b2c31;"></div>
<div style="left:733px;top:748px;width:273px;height:22px;background:#000;"></div>
<div style="left:735px;top:750px;width:269px;height:18px;background:#2b2c31;"></div>
<div style="left:1006.5px;top:742.5px;width:28.5px;height:29.5px;background:#000;border-radius:2px;"></div>
<div style="left:1008.5px;top:744.5px;width:24.5px;height:23.5px;background:#2b2c31;box-shadow:inset 0 0 0 2px #3d4047;"></div>
<svg style="left:1008px;top:744px" width="26" height="22" viewBox="0 0 26 22"><path d="M3 7.5h19l-9.5 10.5z" fill="#d9d7d1"/></svg>
<div style="left:731px;top:809.8px;width:145px;height:4.3px;background:#1e1f23;border-radius:3px;"></div>
<div style="left:729px;top:781.8px;width:149px;height:30.8px;background:#000;border-radius:7px;"></div>
<div style="left:731.2px;top:784.0px;width:144.6px;height:26.2px;background:#3d4047;border-radius:5px;"></div>
<div style="left:733.2px;top:786.0px;width:140.6px;height:21.9px;background:#2b2c31;border-radius:3px;"></div>
<div style="left:887.5px;top:809.8px;width:145px;height:4.3px;background:#1e1f23;border-radius:3px;"></div>
<div style="left:885.5px;top:781.8px;width:149px;height:30.8px;background:#000;border-radius:7px;"></div>
<div style="left:887.7px;top:784.0px;width:144.6px;height:26.2px;background:#3d4047;border-radius:5px;"></div>
<div style="left:889.7px;top:786.0px;width:140.6px;height:21.9px;background:#2b2c31;border-radius:3px;"></div>
<div style="left:731px;top:868.2px;width:145px;height:4.3px;background:#1e1f23;border-radius:3px;"></div>
<div style="left:729px;top:840.2px;width:149px;height:30.8px;background:#000;border-radius:7px;"></div>
<div style="left:731.2px;top:842.4000000000001px;width:144.6px;height:26.2px;background:#3d4047;border-radius:5px;"></div>
<div style="left:733.2px;top:844.4000000000001px;width:140.6px;height:21.9px;background:#2b2c31;border-radius:3px;"></div>
<div style="left:887.5px;top:868.2px;width:145px;height:4.3px;background:#1e1f23;border-radius:3px;"></div>
<div style="left:885.5px;top:840.2px;width:149px;height:30.8px;background:#000;border-radius:7px;"></div>
<div style="left:887.7px;top:842.4000000000001px;width:144.6px;height:26.2px;background:#3d4047;border-radius:5px;"></div>
<div style="left:889.7px;top:844.4000000000001px;width:140.6px;height:21.9px;background:#2b2c31;border-radius:3px;"></div>
<svg style="left:810px;top:715px" width="34" height="34" viewBox="810 715 34 34"><path d="M817 722H833V728H827.6L837.5 737.9V742H832.4L823 732.6V738H817Z" fill="#000" stroke="#000" stroke-width="6" stroke-linejoin="miter"/><path d="M817 722H833V728H827.6L837.5 737.9V742H832.4L823 732.6V738H817Z" fill="#000" stroke="#fff" stroke-width="2" stroke-linejoin="miter"/></svg>
<span id="t0" style="left:301.00px;top:775.93px;font-size:14.5px;line-height:14.5px;font-weight:400;color:#e4e2dc;letter-spacing:0.000px">1</span>
<span id="t1" style="left:73.30px;top:797.31px;font-size:17px;line-height:17px;font-weight:400;color:#d5d3cd;letter-spacing:0.833px">Layer 1</span>
<span id="t2" style="left:602.60px;top:7.51px;font-size:17px;line-height:17px;font-weight:400;color:#d5d3cd;letter-spacing:0.172px">Gentree v1.2.0</span>
<span id="t3" style="left:629.00px;top:40.49px;font-size:13.6px;line-height:13.6px;font-weight:700;color:#d9d7d1;letter-spacing:0.346px">Trunk</span>
<span id="t4" style="left:682.60px;top:40.49px;font-size:13.6px;line-height:13.6px;font-weight:700;color:#d9d7d1;letter-spacing:0.031px">Branch</span>
<span id="t5" style="left:744.60px;top:40.49px;font-size:13.6px;line-height:13.6px;font-weight:700;color:#d9d7d1;letter-spacing:0.267px">Adjustments</span>
<span id="t6" style="left:844.00px;top:40.49px;font-size:13.6px;line-height:13.6px;font-weight:700;color:#d9d7d1;letter-spacing:0.318px">Leaves</span>
<span id="t7" style="left:906.20px;top:40.49px;font-size:13.6px;line-height:13.6px;font-weight:700;color:#d9d7d1;letter-spacing:0.321px">Decors</span>
<span id="t8" style="left:968.90px;top:40.49px;font-size:13.6px;line-height:13.6px;font-weight:700;color:#d9d7d1;letter-spacing:-0.449px">Config</span>
<span id="t9" style="left:607.00px;top:72.11px;font-size:17px;line-height:17px;font-weight:400;color:#d5d3cd;letter-spacing:0.722px">Branch Length:</span>
<span id="t10" style="left:607.00px;top:110.41px;font-size:17px;line-height:17px;font-weight:400;color:#d5d3cd;letter-spacing:0.624px">Branch points:</span>
<span id="t11" style="left:607.00px;top:150.21px;font-size:17px;line-height:17px;font-weight:400;color:#d5d3cd;letter-spacing:0.372px">Curve&amp;Spread:</span>
<span id="t12" style="left:607.00px;top:190.21px;font-size:17px;line-height:17px;font-weight:400;color:#d5d3cd;letter-spacing:0.695px">Thickness Start:</span>
<span id="t13" style="left:607.00px;top:230.21px;font-size:17px;line-height:17px;font-weight:400;color:#d5d3cd;letter-spacing:0.497px">Thickness End:</span>
<span id="t14" style="left:607.00px;top:270.01px;font-size:17px;line-height:17px;font-weight:400;color:#d5d3cd;letter-spacing:0.295px">Distribution:</span>
<span id="t15" style="left:607.00px;top:484.41px;font-size:17px;line-height:17px;font-weight:400;color:#d5d3cd;letter-spacing:0.509px">Leaves Color:</span>
<span id="t16" style="left:607.00px;top:560.21px;font-size:17px;line-height:17px;font-weight:400;color:#d5d3cd;letter-spacing:0.451px">Wood Color:</span>
<span id="t17" style="left:607.00px;top:598.11px;font-size:17px;line-height:17px;font-weight:400;color:#d5d3cd;letter-spacing:0.599px">Extras:</span>
<span id="t18" style="left:607.00px;top:662.21px;font-size:17px;line-height:17px;font-weight:400;color:#d5d3cd;letter-spacing:0.633px">Layering:</span>
<span id="t19" style="left:607.00px;top:741.91px;font-size:17px;line-height:17px;font-weight:400;color:#d5d3cd;letter-spacing:0.140px">Preset:</span>
<span id="t20" style="left:730.60px;top:457.41px;font-size:17px;line-height:17px;font-weight:400;color:#d5d3cd;letter-spacing:0.301px">Light:</span>
<span id="t21" style="left:876.70px;top:457.41px;font-size:17px;line-height:17px;font-weight:400;color:#d5d3cd;letter-spacing:-0.212px">Shadow:</span>
<span id="t22" style="left:759.00px;top:77.91px;font-size:17px;line-height:17px;font-weight:400;color:#d5d3cd;letter-spacing:-0.265px">20.0</span>
<span id="t23" style="left:884.50px;top:115.61px;font-size:17px;line-height:17px;font-weight:400;color:#d5d3cd;letter-spacing:-1.922px">10</span>
<span id="t24" style="left:811.50px;top:155.61px;font-size:17px;line-height:17px;font-weight:400;color:#242428;letter-spacing:-1.922px">10</span>
<span id="t25" style="left:956.50px;top:155.61px;font-size:17px;line-height:17px;font-weight:400;color:#d5d3cd;letter-spacing:-0.422px">60</span>
<span id="t26" style="left:888.05px;top:195.61px;font-size:17px;line-height:17px;font-weight:400;color:#242428;letter-spacing:0.000px">4</span>
<span id="t27" style="left:888.05px;top:235.61px;font-size:17px;line-height:17px;font-weight:400;color:#242428;letter-spacing:0.000px">2</span>
<span id="t28" style="left:778.50px;top:273.41px;font-size:17px;line-height:17px;font-weight:400;color:#d5d3cd;letter-spacing:0.127px">Random</span>
<span id="t29" style="left:894.90px;top:273.41px;font-size:17px;line-height:17px;font-weight:400;color:#d5d3cd;letter-spacing:1.739px">Top</span>
<span id="t30" style="left:978.80px;top:273.41px;font-size:17px;line-height:17px;font-weight:400;color:#d5d3cd;letter-spacing:-0.050px">Even</span>
<span id="t31" style="left:851.30px;top:490.45px;font-size:14px;line-height:14px;font-weight:700;color:#ffffff;letter-spacing:1.502px">#4a692f</span>
<span id="t32" style="left:772.30px;top:528.45px;font-size:14px;line-height:14px;font-weight:700;color:#ffffff;letter-spacing:0.981px">#5c7843</span>
<span id="t33" style="left:929.55px;top:528.45px;font-size:14px;line-height:14px;font-weight:700;color:#ffffff;letter-spacing:0.853px">#3b5425</span>
<span id="t34" style="left:772.30px;top:566.45px;font-size:14px;line-height:14px;font-weight:700;color:#ffffff;letter-spacing:1.374px">#8f563b</span>
<span id="t35" style="left:929.55px;top:566.45px;font-size:14px;line-height:14px;font-weight:700;color:#ffffff;letter-spacing:1.502px">#72442f</span>
<span id="t36" style="left:756.70px;top:601.21px;font-size:17px;line-height:17px;font-weight:400;color:#d5d3cd;letter-spacing:0.592px">New Layer</span>
<span id="t37" style="left:924.40px;top:601.21px;font-size:17px;line-height:17px;font-weight:400;color:#d5d3cd;letter-spacing:0.225px">Outlined</span>
<span id="t38" style="left:756.70px;top:633.41px;font-size:17px;line-height:17px;font-weight:400;color:#d5d3cd;letter-spacing:0.556px">Forest Mode</span>
<span id="t39" style="left:756.70px;top:665.31px;font-size:17px;line-height:17px;font-weight:400;color:#d5d3cd;letter-spacing:-0.133px">Single</span>
<span id="t40" style="left:756.70px;top:697.11px;font-size:17px;line-height:17px;font-weight:400;color:#d5d3cd;letter-spacing:0.556px">Separated</span>
<span id="t41" style="left:920.30px;top:697.11px;font-size:17px;line-height:17px;font-weight:400;color:#d5d3cd;letter-spacing:0.255px">Grouped</span>
<span id="t42" style="left:737.50px;top:749.31px;font-size:17px;line-height:17px;font-weight:400;color:#d5d3cd;letter-spacing:0.148px">apple</span>
<span id="t43" style="left:776.90px;top:787.41px;font-size:17px;line-height:17px;font-weight:400;color:#d5d3cd;letter-spacing:0.214px">Create</span>
<span id="t44" style="left:935.70px;top:787.41px;font-size:17px;line-height:17px;font-weight:400;color:#d5d3cd;letter-spacing:-0.208px">Delete</span>
<span id="t45" style="left:767.00px;top:845.81px;font-size:17px;line-height:17px;font-weight:400;color:#d5d3cd;letter-spacing:0.230px">Generate</span>
<span id="t46" style="left:937.00px;top:845.81px;font-size:17px;line-height:17px;font-weight:400;color:#d5d3cd;letter-spacing:-0.355px">Reset</span>
</body></html>
